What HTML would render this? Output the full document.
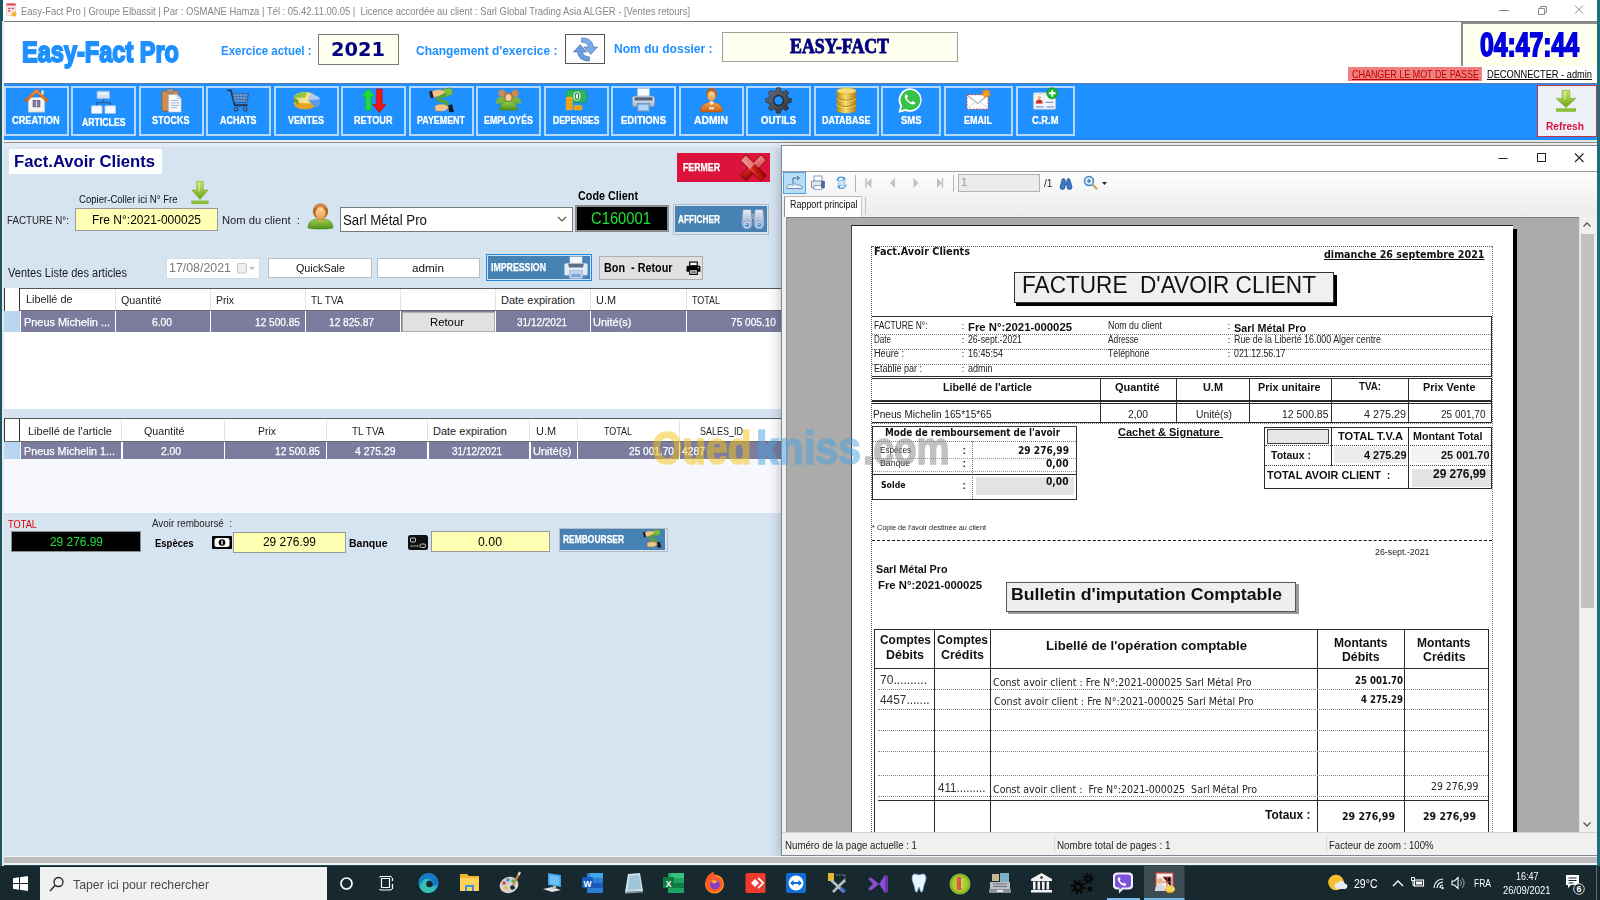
<!DOCTYPE html>
<html lang="fr">
<head>
<meta charset="utf-8">
<title>Easy-Fact Pro</title>
<style>
*{box-sizing:border-box;margin:0;padding:0}
html,body{width:1600px;height:900px;overflow:hidden;background:#fff}
body{font-family:"Liberation Sans","DejaVu Sans",sans-serif;font-size:11px;color:#000;position:relative}
.a{position:absolute;white-space:pre}
svg{overflow:visible}
</style>
</head>
<body>
<svg width="0" height="0" style="position:absolute"><defs>
<linearGradient id="gGold" x1="0" x2="1"><stop offset="0" stop-color="#b8860b"/><stop offset=".45" stop-color="#f7dd6a"/><stop offset="1" stop-color="#b07d10"/></linearGradient>
<linearGradient id="gGreen" x1="0" y1="0" x2="0" y2="1"><stop offset="0" stop-color="#c8e66a"/><stop offset="1" stop-color="#6aa516"/></linearGradient>
<linearGradient id="gRoof" x1="0" y1="0" x2="0" y2="1"><stop offset="0" stop-color="#ff9a3a"/><stop offset="1" stop-color="#d9600f"/></linearGradient>
<linearGradient id="gSkin" x1="0" y1="0" x2="0" y2="1"><stop offset="0" stop-color="#ffd9a0"/><stop offset="1" stop-color="#e89a45"/></linearGradient>
<linearGradient id="gOrange" x1="0" y1="0" x2="0" y2="1"><stop offset="0" stop-color="#f6a04a"/><stop offset="1" stop-color="#c86010"/></linearGradient>
<linearGradient id="gGear" x1="0" y1="0" x2="1" y2="1"><stop offset="0" stop-color="#6a6f78"/><stop offset="1" stop-color="#2c2f36"/></linearGradient>
<linearGradient id="gPrn" x1="0" y1="0" x2="0" y2="1"><stop offset="0" stop-color="#eef2f8"/><stop offset="1" stop-color="#9fb3cc"/></linearGradient>
<linearGradient id="gRedX" x1="0" y1="0" x2="1" y2="1"><stop offset="0" stop-color="#f08a8a"/><stop offset=".5" stop-color="#d01818"/><stop offset="1" stop-color="#8a0808"/></linearGradient>
<linearGradient id="gBino" x1="0" y1="0" x2="0" y2="1"><stop offset="0" stop-color="#e8eef6"/><stop offset="1" stop-color="#7f9cc0"/></linearGradient>
<linearGradient id="gUser" x1="0" y1="0" x2="0" y2="1"><stop offset="0" stop-color="#9ad04a"/><stop offset="1" stop-color="#4f8f1a"/></linearGradient>
</defs></svg>
<!-- sec_top -->
<div class="a" style="left:0px;top:0px;width:1600px;height:21px;background:#fff;"></div>
<svg class="a" style="left:6px;top:3px" width="11" height="14" viewBox="0 0 11 14"><rect x=".5" y=".5" width="9" height="12" fill="#fbeff0" stroke="#e9b8bc" stroke-width=".6"/><rect x=".5" y=".5" width="9" height="2" fill="#d9434a"/><path d="M2 5.500h2.500M5.500 5.500h2.500M2 8h2.500" stroke="#c9565c" stroke-width="1.300"/><circle cx="8" cy="11" r="2.600" fill="#f2b632"/></svg>
<div class="a" style="left:21.00px;top:3.50px;font-size:11px;line-height:14px;color:#868686;transform-origin:0 50%;transform:scaleX(0.8582);">Easy-Fact Pro | Groupe Elbassit | Par : OSMANE Hamza | Tél : 05.42.11.00.05 | &nbsp;Licence accordée au client : Sarl Global Trading Asia ALGER - [Ventes retours]</div>
<svg class="a" style="left:1490px;top:0" width="110" height="21" viewBox="0 0 110 21"><path d="M9 10.500h10" stroke="#8a8a8a" stroke-width="1"/><path d="M48.500 8.500h6v6h-6zM50.500 8.500v-2h6v6h-2" fill="none" stroke="#8a8a8a" stroke-width="1"/><path d="M85 5.500l8 8M93 5.500l-8 8" stroke="#8a8a8a" stroke-width="1"/></svg>
<div class="a" style="left:3px;top:21px;width:1594px;height:62px;background:#fff;border-top:1px solid #7f7f7f;"></div>
<div class="a" style="left:22.00px;top:33.50px;font-size:29px;line-height:36px;font-weight:bold;color:#1e90ff;transform-origin:0 50%;transform:scaleX(0.8117);-webkit-text-stroke:1.9px #1e90ff;">Easy-Fact Pro</div>
<div class="a" style="left:220.50px;top:42.50px;font-size:13px;line-height:16px;font-weight:bold;color:#1e90ff;transform-origin:0 50%;transform:scaleX(0.8819);">Exercice actuel :</div>
<div class="a" style="left:318px;top:33.5px;width:81px;height:31px;background:#fffff0;border:1px solid #7a7a7a;"></div>
<div class="a" style="left:331.00px;top:36.50px;font-size:20px;line-height:25px;font-weight:bold;color:#000080;font-family:'DejaVu Sans','Liberation Sans',sans-serif;transform-origin:0 50%;transform:scaleX(0.9700);">2021</div>
<div class="a" style="left:416.00px;top:42.50px;font-size:13px;line-height:16px;font-weight:bold;color:#1e90ff;transform-origin:0 50%;transform:scaleX(0.9226);">Changement d&#x27;exercice :</div>
<div class="a" style="left:565px;top:34px;width:40px;height:29.5px;background:#fff;border:1px solid #555;"><svg width="27" height="27" viewBox="0 0 28 28" style="position:absolute;left:5.500px;top:.500px"><path d="M10 2C17 2 22 5.500 22 11.500h4.500L19.500 19 12.500 11.500H17C17 8.500 14 6.500 10 6.500z" fill="#7aaae6" stroke="#3f6fb0" stroke-width=".7"/><path d="M18 26C11 26 6 22.500 6 16.500H1.500L8.500 9l7 7.500H11c0 3 3 5 7 5z" fill="#6a9bdc" stroke="#3f6fb0" stroke-width=".7"/></svg></div>
<div class="a" style="left:614.00px;top:39.50px;font-size:13.5px;line-height:17px;font-weight:bold;color:#1e90ff;transform-origin:0 50%;transform:scaleX(0.8933);">Nom du dossier :</div>
<div class="a" style="left:721.5px;top:32px;width:236px;height:29.5px;background:#fffff0;border:1px solid #a0a0a0;"></div>
<div class="a" style="left:790.00px;top:32.50px;font-size:21px;line-height:26px;font-weight:bold;color:#000080;font-family:'Liberation Serif','DejaVu Serif',serif;transform-origin:0 50%;transform:scaleX(0.8483);-webkit-text-stroke:.9px #000080;">EASY-FACT</div>
<div class="a" style="left:1461px;top:22px;width:136px;height:44px;background:#ffffee;border-left:2px solid #8d8d8d;border-top:2px solid #8d8d8d;"></div>
<div class="a" style="left:1480.00px;top:22.50px;font-size:34px;line-height:42px;font-weight:bold;color:#0000e0;transform-origin:0 50%;transform:scaleX(0.7274);-webkit-text-stroke:1.9px #0000e0;">04:47:44</div>
<div class="a" style="left:1348px;top:67px;width:134px;height:13.5px;background:#f08080;"></div>
<div class="a" style="left:1351.50px;top:67.50px;font-size:10.5px;line-height:13px;color:#c00000;transform-origin:0 50%;transform:scaleX(0.8524);text-decoration:underline;">CHANGER LE MOT DE PASSE</div>
<div class="a" style="left:1487.00px;top:67.50px;font-size:10.5px;line-height:13px;transform-origin:0 50%;transform:scaleX(0.8821);text-decoration:underline;">DECONNECTER - admin</div>
<div class="a" style="left:3px;top:82.5px;width:1594px;height:57.5px;background:#1e90ff;border-top:1px solid #5f7fa8;"></div>
<div class="a" style="left:3.5px;top:85.5px;width:65px;height:50px;background:#1e90ff;border:2px solid #b4d9fc;"></div>
<svg width="27" height="27" viewBox="0 0 28 28" style="position:absolute;left:22.5px;top:86.500px"><rect x="5.500" y="11" width="17" height="15" fill="#f4f4f4" stroke="#c4c4c4" stroke-width=".8"/><rect x="10.5" y="14" width="7" height="6.5" fill="#8a7ca8" stroke="#5d5378" stroke-width=".8"/><rect x="13.5" y="14" width="1" height="6.5" fill="#ddd"/><path d="M1.5 14 L14 2 L26.5 14 L24.5 15.8 L14 5.8 L3.5 15.8 Z" fill="url(#gRoof)" stroke="#c0550c" stroke-width=".6"/><rect x="19" y="3.5" width="2.6" height="4.5" fill="#e8e8e8" stroke="#aaa" stroke-width=".5"/></svg>
<div class="a" style="left:12.20px;top:114.00px;font-size:10.5px;line-height:13px;font-weight:bold;color:#fff;transform-origin:0 50%;transform:scaleX(0.8805);text-shadow:0 0 1px #cfe6ff;">CREATION</div>
<div class="a" style="left:71px;top:85.5px;width:65px;height:50px;background:#1e90ff;border:2px solid #b4d9fc;"></div>
<svg width="27" height="27" viewBox="0 0 28 28" style="position:absolute;left:90.0px;top:86.500px"><path d="M14 12v4.500M7 20v-3.800h14V20" fill="none" stroke="#2f5f9c" stroke-width="1.500"/><rect x="7.300" y="4.300" width="13" height="7.700" rx=".8" fill="#d3e2f6" stroke="#a3bde0" stroke-width=".8"/><rect x="8.500" y="5.500" width="10.600" height="2.500" fill="#e9f1fb"/><rect x="1.500" y="19.500" width="11" height="8" rx=".8" fill="#f6f9ff" stroke="#b3c9e8" stroke-width=".8"/><rect x="15.500" y="19.500" width="11" height="8" rx=".8" fill="#f6f9ff" stroke="#b3c9e8" stroke-width=".8"/></svg>
<div class="a" style="left:81.75px;top:115.00px;font-size:11.5px;line-height:14px;font-weight:bold;color:#fff;transform-origin:0 50%;transform:scaleX(0.7565);text-shadow:0 0 1px #cfe6ff;">ARTICLES</div>
<div class="a" style="left:138.5px;top:85.5px;width:65px;height:50px;background:#1e90ff;border:2px solid #b4d9fc;"></div>
<svg width="27" height="27" viewBox="0 0 28 28" style="position:absolute;left:157.5px;top:86.500px"><rect x="4" y="4" width="17" height="21" rx="1.5" fill="#c98f55" stroke="#8f5a2a" stroke-width=".8"/><rect x="9" y="2" width="7" height="4" rx="1" fill="#9a9a9a" stroke="#666" stroke-width=".6"/><path d="M11 8h9l4 4v14H11z" fill="#fdfdfd" stroke="#b5b5b5" stroke-width=".7"/><path d="M20 8v4h4" fill="#dfe6ee" stroke="#b5b5b5" stroke-width=".6"/><path d="M13 14h8M13 16.5h9M13 19h9M13 21.5h7" stroke="#8fb0d8" stroke-width="1"/></svg>
<div class="a" style="left:152.25px;top:114.00px;font-size:10.5px;line-height:13px;font-weight:bold;color:#fff;transform-origin:0 50%;transform:scaleX(0.8605);text-shadow:0 0 1px #cfe6ff;">STOCKS</div>
<div class="a" style="left:206px;top:85.5px;width:65px;height:50px;background:#1e90ff;border:2px solid #b4d9fc;"></div>
<svg width="27" height="27" viewBox="0 0 28 28" style="position:absolute;left:225.0px;top:86.500px"><path d="M3 3.5h3.2l4 15.5h12.5" fill="none" stroke="#25354d" stroke-width="2" stroke-linecap="round" stroke-linejoin="round"/><path d="M8 7h16.5l-2 9H10z" fill="#9fc2ee" fill-opacity=".55" stroke="#3d5f8f" stroke-width="1.2"/><path d="M11.5 7.5l1.3 8M15 7.5l.7 8M18.5 7.5v8M22 7.5l-.8 8M9 10h15M9.6 13h13.7" stroke="#3d5f8f" stroke-width=".8"/><circle cx="11.5" cy="23" r="2.3" fill="#2b4469"/><circle cx="21" cy="23" r="2.3" fill="#2b4469"/><circle cx="11.5" cy="23" r=".9" fill="#9db6d8"/><circle cx="21" cy="23" r=".9" fill="#9db6d8"/></svg>
<div class="a" style="left:220.20px;top:114.00px;font-size:10.5px;line-height:13px;font-weight:bold;color:#fff;transform-origin:0 50%;transform:scaleX(0.8515);text-shadow:0 0 1px #cfe6ff;">ACHATS</div>
<div class="a" style="left:273.5px;top:85.5px;width:65px;height:50px;background:#1e90ff;border:2px solid #b4d9fc;"></div>
<svg width="27" height="27" viewBox="0 0 28 28" style="position:absolute;left:292.5px;top:86.500px"><g transform="translate(-2.500,-.500) scale(1.150,1.050)"><ellipse cx="13" cy="17" rx="10" ry="5.5" fill="#e3a528"/><rect x="3" y="11" width="20" height="6" fill="#e9b83a"/><ellipse cx="13" cy="11" rx="10" ry="5.5" fill="#f7e08a"/><path d="M3 11a10 5.5 0 0 1 12-5.3L13 11z" fill="#8fc63f"/><path d="M3 11v2.5a10 5 0 0 0 4 4V13z" fill="#6da32a"/><path d="M16 13.5l2-5.6a10 5.5 0 0 1 8.5 4.6v5a10 5.5 0 0 1-4 3.5z" fill="#5b9be0"/><path d="M16 13.5l2-5.6a10 5.5 0 0 1 8.5 4.6z" fill="#a9cdf5"/></svg>
<div class="a" style="left:288.00px;top:114.00px;font-size:10.5px;line-height:13px;font-weight:bold;color:#fff;transform-origin:0 50%;transform:scaleX(0.8568);text-shadow:0 0 1px #cfe6ff;">VENTES</div>
<div class="a" style="left:341px;top:85.5px;width:65px;height:50px;background:#1e90ff;border:2px solid #b4d9fc;"></div>
<svg width="27" height="27" viewBox="0 0 28 28" style="position:absolute;left:360.0px;top:86.500px"><path d="M8.5 1.5L1.5 10h4v14h6V10h4z" fill="#1edc3c" stroke="#12a82a" stroke-width=".6"/><path d="M20 26.5L27 18h-4V2h-6v16h-4z" fill="#f01414" stroke="#b40c0c" stroke-width=".6"/></svg>
<div class="a" style="left:354.25px;top:114.00px;font-size:10.5px;line-height:13px;font-weight:bold;color:#fff;transform-origin:0 50%;transform:scaleX(0.8719);text-shadow:0 0 1px #cfe6ff;">RETOUR</div>
<div class="a" style="left:408.5px;top:85.5px;width:65px;height:50px;background:#1e90ff;border:2px solid #b4d9fc;"></div>
<svg width="27" height="27" viewBox="0 0 28 28" style="position:absolute;left:427.5px;top:86.500px"><path d="M15 2l9-1 2 6-9 4z" fill="#7ac143" stroke="#4d8a24" stroke-width=".6"/><path d="M3 6c3-3 9-4 13-2l2 2-5 3-8 2z" fill="#f3c48a" stroke="#c08a50" stroke-width=".5"/><path d="M1 5l3-1 2 7-3 1z" fill="#222"/><path d="M18 8c-3 1-7 2-8 5 2 2 8 1 10 4l-3 3" fill="none" stroke="#5aa02c" stroke-width="3" stroke-linecap="round"/><path d="M7 20c3-2 8-3 12-1l3 2-5 4-9 0z" fill="#f3c48a" stroke="#c08a50" stroke-width=".5"/><path d="M21 19l4-1 2 8h-5z" fill="#1a1a1a"/></svg>
<div class="a" style="left:417.00px;top:114.00px;font-size:10.5px;line-height:13px;font-weight:bold;color:#fff;transform-origin:0 50%;transform:scaleX(0.8479);text-shadow:0 0 1px #cfe6ff;">PAYEMENT</div>
<div class="a" style="left:476px;top:85.5px;width:65px;height:50px;background:#1e90ff;border:2px solid #b4d9fc;"></div>
<svg width="27" height="27" viewBox="0 0 28 28" style="position:absolute;left:495.0px;top:86.500px"><circle cx="7" cy="6.5" r="3.6" fill="#c98a5a"/><circle cx="21" cy="6.5" r="3.6" fill="#c98a5a"/><path d="M1 17c0-5 3-7 6-7s6 2 6 7z" fill="#7fb23a"/><path d="M15 17c0-5 3-7 6-7s6 2 6 7z" fill="#7fb23a"/><path d="M5 24c0-7 4-9 9-9s9 2 9 9z" fill="url(#gUser)" stroke="#4a7d18" stroke-width=".5"/><circle cx="14" cy="10" r="4.6" fill="#b8703c"/><ellipse cx="14" cy="11" rx="3" ry="3.6" fill="#f6cfa0"/></svg>
<div class="a" style="left:484.00px;top:114.00px;font-size:10.5px;line-height:13px;font-weight:bold;color:#fff;transform-origin:0 50%;transform:scaleX(0.8396);text-shadow:0 0 1px #cfe6ff;">EMPLOYÉS</div>
<div class="a" style="left:543.5px;top:85.5px;width:65px;height:50px;background:#1e90ff;border:2px solid #b4d9fc;"></div>
<svg width="27" height="27" viewBox="0 0 28 28" style="position:absolute;left:562.5px;top:86.500px"><path d="M5 3h17l2 2v3l2 2-2 2v4H5l-2-2 1-4-1-4z" fill="#2fb55d" stroke="#1d8a42" stroke-width=".6"/><ellipse cx="14.5" cy="9.5" rx="4.2" ry="5.2" fill="#e9f7e6" stroke="#1d8a42" stroke-width=".6"/><path d="M14.500 6.2a1.7 3 0 0 0 0 6.600a1.700 3 0 0 0 0-6.600z" fill="none" stroke="#1d8a42" stroke-width="1.200"/><rect x="3" y="10" width="7" height="14" rx="1.500" fill="#f2a91e"/><path d="M3 14h7M3 17.500h7M3 21h7" stroke="#d08a0c" stroke-width=".7"/><rect x="11" y="19" width="9" height="5" rx="1.500" fill="#f2a91e"/><path d="M11 21.500h9" stroke="#d08a0c" stroke-width=".7"/></svg>
<div class="a" style="left:552.75px;top:114.00px;font-size:10.5px;line-height:13px;font-weight:bold;color:#fff;transform-origin:0 50%;transform:scaleX(0.8131);text-shadow:0 0 1px #cfe6ff;">DEPENSES</div>
<div class="a" style="left:611px;top:85.5px;width:65px;height:50px;background:#1e90ff;border:2px solid #b4d9fc;"></div>
<svg width="27" height="27" viewBox="0 0 28 28" style="position:absolute;left:630.0px;top:86.500px"><rect x="8" y="1.5" width="12" height="9" fill="#fafcff" stroke="#b9c6d8" stroke-width=".7"/><rect x="2.5" y="9.500" width="23" height="11" rx="2.200" fill="url(#gPrn)" stroke="#7d8fa8" stroke-width=".7"/><rect x="4.500" y="10.500" width="19" height="3.500" rx="1" fill="#56657c"/><rect x="7.500" y="17" width="13" height="8.500" fill="#7fb0e6" stroke="#5f87b8" stroke-width=".7"/><rect x="9" y="18.500" width="10" height="5.500" fill="#b5d3f3"/></svg>
<div class="a" style="left:621.00px;top:114.00px;font-size:10.5px;line-height:13px;font-weight:bold;color:#fff;transform-origin:0 50%;transform:scaleX(0.9074);text-shadow:0 0 1px #cfe6ff;">EDITIONS</div>
<div class="a" style="left:678.5px;top:85.5px;width:65px;height:50px;background:#1e90ff;border:2px solid #b4d9fc;"></div>
<svg width="27" height="27" viewBox="0 0 28 28" style="position:absolute;left:697.5px;top:86.500px"><path d="M2.500 26c0-8 5-10 11.500-10s11.500 2 11.500 10z" fill="url(#gOrange)" stroke="#a8500c" stroke-width=".5"/><path d="M8.500 7.500c0-4 2.500-6.500 5.500-6.500s5.500 2.500 5.500 6.500c0 2-1 3-1 3h-9s-1-1-1-3z" fill="#b8651f"/><ellipse cx="14" cy="9.500" rx="4" ry="5.200" fill="url(#gSkin)" stroke="#c47a30" stroke-width=".4"/><path d="M11 16l3 3 3-3-3-1.500z" fill="#f8e2c0"/><rect x="11.500" y="21" width="5" height="2.200" fill="#fff" fill-opacity=".8"/></svg>
<div class="a" style="left:694.00px;top:114.00px;font-size:10.5px;line-height:13px;font-weight:bold;color:#fff;transform-origin:0 50%;transform:scaleX(0.9877);text-shadow:0 0 1px #cfe6ff;">ADMIN</div>
<div class="a" style="left:746px;top:85.5px;width:65px;height:50px;background:#1e90ff;border:2px solid #b4d9fc;"></div>
<svg width="27" height="27" viewBox="0 0 28 28" style="position:absolute;left:765.0px;top:86.500px"><path d="M12 1.500h4l.7 3.300 2.300 1 2.900-1.800 2.800 2.800-1.800 2.900 1 2.300 3.300.7v4l-3.300.7-1 2.300 1.800 2.900-2.800 2.800-2.900-1.800-2.300 1-.7 3.300h-4l-.7-3.300-2.300-1-2.900 1.800-2.800-2.800 1.800-2.900-1-2.300-3.300-.7v-4l3.300-.7 1-2.300-1.800-2.900 2.800-2.800 2.900 1.800 2.300-1z" fill="url(#gGear)" stroke="#23262c" stroke-width=".6" transform="translate(0,-.7)"/><circle cx="14" cy="14" r="5" fill="#1e90ff" stroke="#1a1d22" stroke-width="1.200"/></svg>
<div class="a" style="left:761.00px;top:114.00px;font-size:10.5px;line-height:13px;font-weight:bold;color:#fff;transform-origin:0 50%;transform:scaleX(0.9091);text-shadow:0 0 1px #cfe6ff;">OUTILS</div>
<div class="a" style="left:813.5px;top:85.5px;width:65px;height:50px;background:#1e90ff;border:2px solid #b4d9fc;"></div>
<svg width="27" height="27" viewBox="0 0 28 28" style="position:absolute;left:832.5px;top:86.500px"><rect x="4" y="4" width="20" height="20" fill="url(#gGold)"/><ellipse cx="14" cy="24" rx="10" ry="3.200" fill="url(#gGold)"/><ellipse cx="14" cy="4" rx="10" ry="3.200" fill="#f5dc72" stroke="#c89a1e" stroke-width=".5"/><path d="M4 10.500a10 3.200 0 0 0 20 0M4 17a10 3.200 0 0 0 20 0" fill="none" stroke="#a87a10" stroke-width="1"/><path d="M4 11.500a10 3.200 0 0 0 20 0M4 18a10 3.200 0 0 0 20 0" fill="none" stroke="#fbe98e" stroke-width=".7"/></svg>
<div class="a" style="left:821.75px;top:114.00px;font-size:10.5px;line-height:13px;font-weight:bold;color:#fff;transform-origin:0 50%;transform:scaleX(0.8542);text-shadow:0 0 1px #cfe6ff;">DATABASE</div>
<div class="a" style="left:881.3px;top:85.5px;width:59.3px;height:50px;background:#1e90ff;border:2px solid #b4d9fc;"></div>
<svg width="27" height="27" viewBox="0 0 28 28" style="position:absolute;left:897.4px;top:86.500px"><path d="M14 1.200a12.300 12.300 0 0 0-10.600 18.600L1.500 26.800l7.200-1.900A12.300 12.300 0 1 0 14 1.200z" fill="#fff"/><path d="M14 3.200a10.300 10.300 0 0 0-8.700 15.900L4.200 24l5-1.300A10.300 10.300 0 1 0 14 3.200z" fill="#35c14a"/><path d="M10.300 8c-.5-.9-1.600-.4-2 .5-.8 1.700.3 4.300 2.600 6.600s5.200 3.700 7 2.900c1-.5 1.500-1.700.6-2.200l-2-1.100c-.6-.3-1 .6-1.500 1-.4.300-2-.6-3.100-1.800s-2-2.700-1.600-3.100c.5-.5 1.300-.9 1-1.500z" fill="#fff"/></svg>
<div class="a" style="left:900.70px;top:114.00px;font-size:10.5px;line-height:13px;font-weight:bold;color:#fff;transform-origin:0 50%;transform:scaleX(0.9005);text-shadow:0 0 1px #cfe6ff;">SMS</div>
<div class="a" style="left:944px;top:85.5px;width:68.8px;height:50px;background:#1e90ff;border:2px solid #b4d9fc;"></div>
<svg width="27" height="27" viewBox="0 0 28 28" style="position:absolute;left:964.9px;top:86.500px"><rect x="2" y="8" width="22" height="15" rx="1" fill="#f8f8f8" stroke="#c33" stroke-width="1" stroke-dasharray="2 1.500"/><rect x="3" y="9" width="20" height="13" fill="#fdfdfd"/><path d="M3 9l10 8 10-8" fill="none" stroke="#aeb6c2" stroke-width="1.200"/><path d="M3 22l7.500-7M23 22l-7.500-7" stroke="#c9cfd8" stroke-width=".9"/><path d="M22 1.500l1.300 2.700 3-.6-1.400 2.600 2.100 2.100-3 .4.200 3-2.200-2-2.200 2 .2-3-3-.4 2.100-2.100-1.400-2.600 3 .6z" fill="#f79a1e" stroke="#d9780c" stroke-width=".4"/></svg>
<div class="a" style="left:964.40px;top:114.00px;font-size:10.5px;line-height:13px;font-weight:bold;color:#fff;transform-origin:0 50%;transform:scaleX(0.8570);text-shadow:0 0 1px #cfe6ff;">EMAIL</div>
<div class="a" style="left:1015.7px;top:85.5px;width:59.8px;height:50px;background:#1e90ff;border:2px solid #b4d9fc;"></div>
<svg width="27" height="27" viewBox="0 0 28 28" style="position:absolute;left:1032.1px;top:86.500px"><rect x="1.500" y="6" width="23" height="17" rx="1" fill="#f3f5f8" stroke="#b9c0ca" stroke-width=".8"/><rect x="3.500" y="8" width="8" height="9" fill="#fff" stroke="#ccc" stroke-width=".5"/><circle cx="7.500" cy="11" r="2" fill="#e9b98a"/><path d="M4 17c0-3 1.500-4 3.500-4s3.500 1 3.500 4z" fill="#d62a2a"/><path d="M4 20.500h8M15 20.500h8M14 16h8" stroke="#7aa0d0" stroke-width="1.300"/><circle cx="21" cy="6.500" r="5.800" fill="#18b52c" stroke="#0d8a1d" stroke-width=".6"/><path d="M21 3v7M17.500 6.500h7" stroke="#fff" stroke-width="2"/></svg>
<div class="a" style="left:1032.35px;top:114.00px;font-size:10.5px;line-height:13px;font-weight:bold;color:#fff;transform-origin:0 50%;transform:scaleX(0.8908);text-shadow:0 0 1px #cfe6ff;">C.R.M</div>
<div class="a" style="left:1536.5px;top:84.5px;width:60px;height:52px;background:#eef0f8;border:1px solid #c8324a;"></div>
<svg width="24" height="26" viewBox="0 0 28 28" style="position:absolute;left:1553.5px;top:88px"><path d="M9.500 1.500h9V11h7L14 21.500 2.500 11h7z" fill="url(#gGreen)" stroke="#7aa82a" stroke-width=".7"/><path d="M11.500 2.500h2.500v10h-2.500z" fill="#e2f3a0" fill-opacity=".6"/><rect x="2.500" y="23" width="23" height="3.200" fill="#8cbf2e" stroke="#7aa82a" stroke-width=".5"/></svg>
<div class="a" style="left:1546.00px;top:119.00px;font-size:11.5px;line-height:14px;font-weight:bold;color:#dc143c;transform-origin:0 50%;transform:scaleX(0.8873);">Refresh</div>
<div class="a" style="left:3px;top:140px;width:1594px;height:3px;background:#f0f0f0;border-bottom:1px solid #8f8f8f;"></div>
<!-- sec_left -->
<div class="a" style="left:3px;top:143px;width:778px;height:713px;background:#d6e4f2;"></div>
<div class="a" style="left:3px;top:143px;width:778px;height:4px;background:#e2ebf5;"></div>
<div class="a" style="left:9px;top:148.5px;width:152.5px;height:25px;background:#fff;"></div>
<div class="a" style="left:14.00px;top:151.50px;font-size:16px;line-height:20px;font-weight:bold;color:#000080;transform-origin:0 50%;transform:scaleX(1.0411);">Fact.Avoir Clients</div>
<div class="a" style="left:676.5px;top:153px;width:93.5px;height:28.5px;background:#dc143c;"></div>
<div class="a" style="left:683.00px;top:160.50px;font-size:10.5px;line-height:13px;font-weight:bold;color:#fff;transform-origin:0 50%;transform:scaleX(0.8344);-webkit-text-stroke:.25px #fff;">FERMER</div>
<svg preserveAspectRatio="none" width="27" height="27" viewBox="0 0 28 28" style="position:absolute;left:740px;top:153.5px"><g transform="translate(14,14.500)"><rect x="-4.300" y="-15.500" width="8.600" height="31" rx="1.200" transform="rotate(45)" fill="#7a0a0a"/><rect x="-4.300" y="-15.500" width="8.600" height="31" rx="1.200" transform="rotate(-45)" fill="#7a0a0a"/><rect x="-3.600" y="-14.800" width="7.200" height="29.600" rx="1" transform="rotate(45)" fill="url(#gRedX)"/><rect x="-3.600" y="-14.800" width="7.200" height="29.600" rx="1" transform="rotate(-45)" fill="url(#gRedX)"/><rect x="-3.600" y="-14.800" width="7.200" height="13" rx="1" transform="rotate(-45)" fill="#f29a9a" fill-opacity=".75"/><rect x="-3.600" y="-14.800" width="7.200" height="11" rx="1" transform="rotate(45)" fill="#ee8a8a" fill-opacity=".6"/></g></svg>
<div class="a" style="left:78.50px;top:191.50px;font-size:11px;line-height:14px;color:#111;transform-origin:0 50%;transform:scaleX(0.8701);">Copier-Coller ici N° Fre</div>
<svg preserveAspectRatio="none" width="20" height="25.5" viewBox="0 0 28 28" style="position:absolute;left:189.5px;top:179.5px"><path d="M9.500 1.500h9V11h7L14 21.500 2.500 11h7z" fill="url(#gGreen)" stroke="#7aa82a" stroke-width=".7"/><path d="M11.500 2.500h2.500v10h-2.500z" fill="#e2f3a0" fill-opacity=".6"/><rect x="2.500" y="23" width="23" height="3.200" fill="#8cbf2e" stroke="#7aa82a" stroke-width=".5"/></svg>
<div class="a" style="left:7.00px;top:212.50px;font-size:11px;line-height:14px;color:#222;transform-origin:0 50%;transform:scaleX(0.8883);">FACTURE N°:</div>
<div class="a" style="left:75px;top:208px;width:143px;height:22.5px;background:#ffffb4;border:1px solid #9a9a9a;"></div>
<div class="a" style="left:92.00px;top:211.50px;font-size:13px;line-height:16px;transform-origin:0 50%;transform:scaleX(0.9241);">Fre N°:2021-000025</div>
<div class="a" style="left:222.00px;top:212.50px;font-size:11.5px;line-height:14px;color:#222;transform-origin:0 50%;transform:scaleX(0.9761);">Nom du client &nbsp;:</div>
<svg preserveAspectRatio="none" width="27" height="26.5" viewBox="0 0 28 28" style="position:absolute;left:306.5px;top:202.5px"><path d="M1 26.300c0-6 3.500-8.300 8.500-9.300l4.500 1.500 4.500-1.500c5 1 8.500 3.300 8.500 9.300-5 1.700-21 1.700-26 0z" fill="url(#gUser)" stroke="#3f7a14" stroke-width=".5"/><path d="M11.500 15h5v4l-2.500 1.500-2.500-1.500z" fill="#e8a050"/><ellipse cx="14" cy="8.800" rx="8" ry="8.300" fill="#b5651f"/><path d="M6.500 7c1-4 4-6 7.500-6s6.500 2 7.500 6c-2-2-5-3-7.500-3s-5.500 1-7.500 3z" fill="#d9884a"/><ellipse cx="14" cy="10.800" rx="5.200" ry="6.800" fill="url(#gSkin)" stroke="#c47a30" stroke-width=".4"/></svg>
<div class="a" style="left:340px;top:207px;width:233px;height:24.5px;background:#fff;border:1px solid #7a7a7a;"></div>
<div class="a" style="left:343.00px;top:210.50px;font-size:14px;line-height:18px;color:#111;transform-origin:0 50%;transform:scaleX(0.9470);">Sarl Métal Pro</div>
<svg class="a" style="left:557px;top:216px" width="10" height="7" viewBox="0 0 10 7"><path d="M1 1l4 4 4-4" fill="none" stroke="#555" stroke-width="1.200"/></svg>
<div class="a" style="left:578.00px;top:188.50px;font-size:12px;line-height:15px;font-weight:bold;transform-origin:0 50%;transform:scaleX(0.8999);">Code Client</div>
<div class="a" style="left:575px;top:205px;width:94px;height:27px;background:#000;border:2px solid #8c8c8c;"></div>
<div class="a" style="left:591.00px;top:208.50px;font-size:16px;line-height:20px;color:#22e03a;transform-origin:0 50%;transform:scaleX(0.9237);">C160001</div>
<div class="a" style="left:673px;top:203.5px;width:95.5px;height:31px;background:#d9e3ee;border:1px solid #b5bcc6;"></div>
<div class="a" style="left:675px;top:206px;width:92px;height:26px;background:#4682b4;"></div>
<div class="a" style="left:678.00px;top:213.00px;font-size:10.5px;line-height:13px;font-weight:bold;color:#fff;transform-origin:0 50%;transform:scaleX(0.7911);-webkit-text-stroke:.25px #fff;">AFFICHER</div>
<svg preserveAspectRatio="none" width="26" height="24" viewBox="0 0 28 28" style="position:absolute;left:739.5px;top:207px"><rect x="11" y="8" width="6" height="6" fill="#8fa8c8"/><path d="M4.500 3h6c1 0 1.500.5 1.500 1.500l1.500 15.500a6 6 0 1 1-12 0l1.500-15.500c0-1 .5-1.500 1.500-1.500z" fill="url(#gBino)" stroke="#5b7aa3" stroke-width=".6"/><path d="M17.500 3h6c1 0 1.500.5 1.500 1.500l1.500 15.500a6 6 0 1 1-12 0l1.500-15.500c0-1 .5-1.500 1.500-1.500z" fill="url(#gBino)" stroke="#5b7aa3" stroke-width=".6"/><circle cx="7.500" cy="21" r="4.300" fill="#dfe8f4" stroke="#6b88ad" stroke-width=".6"/><circle cx="20.500" cy="21" r="4.300" fill="#dfe8f4" stroke="#6b88ad" stroke-width=".6"/><circle cx="7.500" cy="21" r="2.700" fill="#4f8fdc"/><circle cx="20.500" cy="21" r="2.700" fill="#4f8fdc"/><circle cx="6.800" cy="20.300" r="1" fill="#bfe0ff"/><circle cx="19.800" cy="20.300" r="1" fill="#bfe0ff"/></svg>
<div class="a" style="left:8.00px;top:265.50px;font-size:12px;line-height:15px;color:#1a1a1a;transform-origin:0 50%;transform:scaleX(0.9196);">Ventes Liste des articles</div>
<div class="a" style="left:166px;top:257.5px;width:94px;height:21.5px;background:#fff;border:1px solid #d5dbe3;"></div>
<div class="a" style="left:168.50px;top:261.00px;font-size:12px;line-height:15px;color:#7a7a7a;transform-origin:0 50%;transform:scaleX(1.0323);">17/08/2021</div>
<svg class="a" style="left:237px;top:262px" width="20" height="13" viewBox="0 0 20 13"><rect x=".5" y="1.500" width="9" height="9.500" rx="1" fill="#eee" stroke="#c4c4c4"/><path d="M12 5l3 3 3-3z" fill="#c0c0c0"/></svg>
<div class="a" style="left:268px;top:258px;width:104px;height:20px;background:#fff;border:1px solid #b9bec6;"></div>
<div class="a" style="left:295.50px;top:261.00px;font-size:11.5px;line-height:14px;color:#111;transform-origin:0 50%;transform:scaleX(0.9347);">QuickSale</div>
<div class="a" style="left:377px;top:258px;width:103px;height:20px;background:#fff;border:1px solid #b9bec6;"></div>
<div class="a" style="left:412.00px;top:261.00px;font-size:11.5px;line-height:14px;color:#111;transform-origin:0 50%;transform:scaleX(1.0214);">admin</div>
<div class="a" style="left:485.5px;top:253.5px;width:106.5px;height:27.5px;background:#4682b4;border:1.500px solid #1e8be6;box-shadow:inset 0 0 0 1px #cfe2f5;"></div>
<div class="a" style="left:490.50px;top:261.00px;font-size:10.5px;line-height:13px;font-weight:bold;color:#fff;transform-origin:0 50%;transform:scaleX(0.8341);-webkit-text-stroke:.25px #fff;">IMPRESSION</div>
<svg preserveAspectRatio="none" width="26" height="24" viewBox="0 0 28 28" style="position:absolute;left:563px;top:255.5px"><rect x="7.500" y="1" width="13" height="10" fill="#f7f9fc" stroke="#d0d9e6" stroke-width=".6"/><path d="M4 8.500h20c1.500 0 2.500 1 2.500 2.500v10c0 1-.8 1.500-1.500 1.500H3c-.7 0-1.500-.5-1.500-1.500V11c0-1.500 1-2.500 2.500-2.500z" fill="#e4ebf4" stroke="#a9b8cc" stroke-width=".6"/><path d="M5.500 9h17l-1 4.500h-15z" fill="#5f6f86"/><rect x="7" y="17" width="14" height="9.500" fill="#b9d3ef" stroke="#88a6cc" stroke-width=".6"/><rect x="9" y="21" width="10" height="3.500" fill="#7fa6d6"/></svg>
<div class="a" style="left:599px;top:255.5px;width:104px;height:24.5px;background:#e1e1e1;border:1px solid #adadad;"></div>
<div class="a" style="left:604.00px;top:261.00px;font-size:12px;line-height:15px;font-weight:bold;transform-origin:0 50%;transform:scaleX(0.9013);">Bon &nbsp;- Retour</div>
<svg preserveAspectRatio="none" width="15" height="15" viewBox="0 0 28 28" style="position:absolute;left:686px;top:260.5px"><rect x="7" y="2" width="14" height="7" fill="#fff" stroke="#000" stroke-width="2.200"/><path d="M3 9h22a2 2 0 0 1 2 2v9h-5v-5H6v5H1v-9a2 2 0 0 1 2-2z" fill="#000"/><rect x="7" y="16" width="14" height="9" fill="#fff" stroke="#000" stroke-width="2.200"/><path d="M9.500 19h9M9.500 22h9" stroke="#000" stroke-width="1.300"/><circle cx="23" cy="12.500" r="1.200" fill="#fff"/></svg>
<div class="a" style="left:4px;top:287.5px;width:777px;height:121px;background:#fff;border-top:1px solid #555;"></div>
<div class="a" style="left:4px;top:310px;width:777px;height:1px;background:#6a6a6a;"></div>
<div class="a" style="left:4px;top:288px;width:15.5px;height:23px;background:#fff;border-right:1.500px solid #333;border-left:1px solid #333;"></div>
<div class="a" style="left:114.5px;top:289px;width:1px;height:21px;background:#e3e3e3;"></div>
<div class="a" style="left:209.5px;top:289px;width:1px;height:21px;background:#e3e3e3;"></div>
<div class="a" style="left:304.5px;top:289px;width:1px;height:21px;background:#e3e3e3;"></div>
<div class="a" style="left:399.5px;top:289px;width:1px;height:21px;background:#e3e3e3;"></div>
<div class="a" style="left:494.5px;top:289px;width:1px;height:21px;background:#e3e3e3;"></div>
<div class="a" style="left:589.5px;top:289px;width:1px;height:21px;background:#e3e3e3;"></div>
<div class="a" style="left:685.5px;top:289px;width:1px;height:21px;background:#e3e3e3;"></div>
<div class="a" style="left:26.00px;top:291.50px;font-size:11px;line-height:14px;color:#222;transform-origin:0 50%;transform:scaleX(0.9874);">Libellé de</div>
<div class="a" style="left:121.00px;top:293.00px;font-size:11px;line-height:14px;color:#222;transform-origin:0 50%;transform:scaleX(0.9737);">Quantité</div>
<div class="a" style="left:216.00px;top:293.00px;font-size:11px;line-height:14px;color:#222;transform-origin:0 50%;transform:scaleX(0.9497);">Prix</div>
<div class="a" style="left:311.00px;top:293.00px;font-size:11px;line-height:14px;color:#222;transform-origin:0 50%;transform:scaleX(0.9059);">TL TVA</div>
<div class="a" style="left:501.00px;top:293.00px;font-size:11px;line-height:14px;color:#222;transform-origin:0 50%;transform:scaleX(1.0000);">Date expiration</div>
<div class="a" style="left:596.00px;top:293.00px;font-size:11px;line-height:14px;color:#222;transform-origin:0 50%;transform:scaleX(0.9915);">U.M</div>
<div class="a" style="left:692.00px;top:293.00px;font-size:11px;line-height:14px;color:#222;transform-origin:0 50%;transform:scaleX(0.8131);">TOTAL</div>
<div class="a" style="left:4px;top:311px;width:15.5px;height:21px;background:#b9d5ef;"></div>
<div class="a" style="left:20.5px;top:311px;width:760px;height:21px;background:#7b7c9e;"></div>
<div class="a" style="left:114.5px;top:311px;width:1.5px;height:21px;background:#fff;"></div>
<div class="a" style="left:209.5px;top:311px;width:1.5px;height:21px;background:#fff;"></div>
<div class="a" style="left:304.5px;top:311px;width:1.5px;height:21px;background:#fff;"></div>
<div class="a" style="left:399.5px;top:311px;width:1.5px;height:21px;background:#fff;"></div>
<div class="a" style="left:494.5px;top:311px;width:1.5px;height:21px;background:#fff;"></div>
<div class="a" style="left:589.5px;top:311px;width:1.5px;height:21px;background:#fff;"></div>
<div class="a" style="left:685.5px;top:311px;width:1.5px;height:21px;background:#fff;"></div>
<div class="a" style="left:401.5px;top:311.5px;width:93px;height:20.5px;background:#e1e1e1;border:1px solid #adadad;"></div>
<div class="a" style="left:429.50px;top:315.00px;font-size:11.5px;line-height:14px;transform-origin:0 50%;transform:scaleX(0.9846);">Retour</div>
<div class="a" style="left:24.00px;top:315.00px;font-size:11px;line-height:14px;color:#fff;transform-origin:0 50%;transform:scaleX(0.9905);-webkit-text-stroke:.25px #fff;">Pneus Michelin ...</div>
<div class="a" style="left:152.00px;top:315.00px;font-size:11px;line-height:14px;color:#fff;transform-origin:0 50%;transform:scaleX(0.9336);-webkit-text-stroke:.25px #fff;">6.00</div>
<div class="a" style="left:255.00px;top:315.00px;font-size:11px;line-height:14px;color:#fff;transform-origin:0 50%;transform:scaleX(0.9195);-webkit-text-stroke:.25px #fff;">12 500.85</div>
<div class="a" style="left:329.00px;top:315.00px;font-size:11px;line-height:14px;color:#fff;transform-origin:0 50%;transform:scaleX(0.9195);-webkit-text-stroke:.25px #fff;">12 825.87</div>
<div class="a" style="left:517.00px;top:315.00px;font-size:11px;line-height:14px;color:#fff;transform-origin:0 50%;transform:scaleX(0.9081);-webkit-text-stroke:.25px #fff;">31/12/2021</div>
<div class="a" style="left:593.00px;top:315.00px;font-size:11px;line-height:14px;color:#fff;transform-origin:0 50%;transform:scaleX(0.9996);-webkit-text-stroke:.25px #fff;">Unité(s)</div>
<div class="a" style="left:731.00px;top:315.00px;font-size:11px;line-height:14px;color:#fff;transform-origin:0 50%;transform:scaleX(0.9195);-webkit-text-stroke:.25px #fff;">75 005.10</div>
<div class="a" style="left:4px;top:418px;width:777px;height:95px;background:#f6f8fd;border-top:1px solid #555;"></div>
<div class="a" style="left:4px;top:419px;width:777px;height:22px;background:#fff;"></div>
<div class="a" style="left:4px;top:440.5px;width:777px;height:1px;background:#6a6a6a;"></div>
<div class="a" style="left:4px;top:419px;width:15.5px;height:22px;background:#fff;border-right:1.500px solid #333;border-left:1px solid #333;"></div>
<div class="a" style="left:121.0px;top:420px;width:1px;height:20px;background:#e3e3e3;"></div>
<div class="a" style="left:223.5px;top:420px;width:1px;height:20px;background:#e3e3e3;"></div>
<div class="a" style="left:325.5px;top:420px;width:1px;height:20px;background:#e3e3e3;"></div>
<div class="a" style="left:427.0px;top:420px;width:1px;height:20px;background:#e3e3e3;"></div>
<div class="a" style="left:529.0px;top:420px;width:1px;height:20px;background:#e3e3e3;"></div>
<div class="a" style="left:576.5px;top:420px;width:1px;height:20px;background:#e3e3e3;"></div>
<div class="a" style="left:678.5px;top:420px;width:1px;height:20px;background:#e3e3e3;"></div>
<div class="a" style="left:28.00px;top:424.00px;font-size:11px;line-height:14px;color:#222;transform-origin:0 50%;transform:scaleX(0.9994);">Libellé de l&#x27;article</div>
<div class="a" style="left:143.75px;top:424.00px;font-size:11px;line-height:14px;color:#222;transform-origin:0 50%;transform:scaleX(0.9737);">Quantité</div>
<div class="a" style="left:258.00px;top:424.00px;font-size:11px;line-height:14px;color:#222;transform-origin:0 50%;transform:scaleX(0.9497);">Prix</div>
<div class="a" style="left:351.75px;top:424.00px;font-size:11px;line-height:14px;color:#222;transform-origin:0 50%;transform:scaleX(0.9059);">TL TVA</div>
<div class="a" style="left:433.00px;top:424.00px;font-size:11px;line-height:14px;color:#222;transform-origin:0 50%;transform:scaleX(1.0000);">Date expiration</div>
<div class="a" style="left:536.00px;top:424.00px;font-size:11px;line-height:14px;color:#222;transform-origin:0 50%;transform:scaleX(0.9915);">U.M</div>
<div class="a" style="left:604.00px;top:424.00px;font-size:11px;line-height:14px;color:#222;transform-origin:0 50%;transform:scaleX(0.8131);">TOTAL</div>
<div class="a" style="left:699.50px;top:424.00px;font-size:11px;line-height:14px;color:#222;transform-origin:0 50%;transform:scaleX(0.8176);">SALES_ID</div>
<div class="a" style="left:4px;top:441.5px;width:15.5px;height:17px;background:#b9d5ef;"></div>
<div class="a" style="left:20.5px;top:441.5px;width:760px;height:17px;background:#7b7c9e;"></div>
<div class="a" style="left:121.0px;top:441.5px;width:1.5px;height:17px;background:#fff;"></div>
<div class="a" style="left:223.5px;top:441.5px;width:1.5px;height:17px;background:#fff;"></div>
<div class="a" style="left:325.5px;top:441.5px;width:1.5px;height:17px;background:#fff;"></div>
<div class="a" style="left:427.0px;top:441.5px;width:1.5px;height:17px;background:#fff;"></div>
<div class="a" style="left:529.0px;top:441.5px;width:1.5px;height:17px;background:#fff;"></div>
<div class="a" style="left:576.5px;top:441.5px;width:1.5px;height:17px;background:#fff;"></div>
<div class="a" style="left:678.5px;top:441.5px;width:1.5px;height:17px;background:#fff;"></div>
<div class="a" style="left:24.00px;top:443.50px;font-size:11px;line-height:14px;color:#fff;transform-origin:0 50%;transform:scaleX(0.9792);-webkit-text-stroke:.25px #fff;">Pneus Michelin 1...</div>
<div class="a" style="left:161.00px;top:443.50px;font-size:11px;line-height:14px;color:#fff;transform-origin:0 50%;transform:scaleX(0.9336);-webkit-text-stroke:.25px #fff;">2.00</div>
<div class="a" style="left:275.00px;top:443.50px;font-size:11px;line-height:14px;color:#fff;transform-origin:0 50%;transform:scaleX(0.9195);-webkit-text-stroke:.25px #fff;">12 500.85</div>
<div class="a" style="left:354.75px;top:443.50px;font-size:11px;line-height:14px;color:#fff;transform-origin:0 50%;transform:scaleX(0.9456);-webkit-text-stroke:.25px #fff;">4 275.29</div>
<div class="a" style="left:452.00px;top:443.50px;font-size:11px;line-height:14px;color:#fff;transform-origin:0 50%;transform:scaleX(0.9081);-webkit-text-stroke:.25px #fff;">31/12/2021</div>
<div class="a" style="left:533.00px;top:443.50px;font-size:11px;line-height:14px;color:#fff;transform-origin:0 50%;transform:scaleX(0.9996);-webkit-text-stroke:.25px #fff;">Unité(s)</div>
<div class="a" style="left:629.00px;top:443.50px;font-size:11px;line-height:14px;color:#fff;transform-origin:0 50%;transform:scaleX(0.9195);-webkit-text-stroke:.25px #fff;">25 001.70</div>
<div class="a" style="left:682.00px;top:443.50px;font-size:11px;line-height:14px;color:#fff;transform-origin:0 50%;transform:scaleX(0.9394);-webkit-text-stroke:.25px #fff;">4287</div>
<div class="a" style="left:8.00px;top:516.50px;font-size:11px;line-height:14px;color:#e00000;transform-origin:0 50%;transform:scaleX(0.8421);">TOTAL</div>
<div class="a" style="left:10.5px;top:530.5px;width:130.5px;height:21.5px;background:#000;border:1.500px solid #8c8c8c;"></div>
<div class="a" style="left:49.50px;top:533.50px;font-size:13px;line-height:16px;color:#22e03a;transform-origin:0 50%;transform:scaleX(0.9163);">29 276.99</div>
<div class="a" style="left:152.00px;top:516.00px;font-size:11px;line-height:14px;color:#222;transform-origin:0 50%;transform:scaleX(0.8921);">Avoir remboursé &nbsp;:</div>
<div class="a" style="left:154.50px;top:535.50px;font-size:11.5px;line-height:14px;font-weight:bold;transform-origin:0 50%;transform:scaleX(0.8246);">Espèces</div>
<svg class="a" style="left:211.500px;top:536px" width="20" height="13" viewBox="0 0 20 13"><rect width="20" height="13" rx="1" fill="#000"/><rect x="2.500" y="2" width="15" height="9" rx="2.500" fill="#fff"/><circle cx="10" cy="6.500" r="3.300" fill="#000"/><rect x="9.300" y="4.500" width="1.400" height="4" fill="#fff"/></svg>
<div class="a" style="left:233px;top:531.5px;width:113px;height:21px;background:#ffffb4;border:1px solid #9a9a9a;"></div>
<div class="a" style="left:263.00px;top:534.00px;font-size:13px;line-height:16px;transform-origin:0 50%;transform:scaleX(0.9163);">29 276.99</div>
<div class="a" style="left:349.00px;top:535.50px;font-size:11.5px;line-height:14px;font-weight:bold;transform-origin:0 50%;transform:scaleX(0.9129);">Banque</div>
<svg class="a" style="left:407.500px;top:535px" width="20" height="15" viewBox="0 0 20 15"><rect width="20" height="15" rx="2.500" fill="#111"/><rect x="2.500" y="3" width="5" height="4" rx="1" fill="none" stroke="#ddd" stroke-width=".9"/><path d="M2.500 11h2M5.500 11h2M8.500 11h2" stroke="#ddd" stroke-width="1"/><rect x="12" y="9" width="5.500" height="3.500" rx="1.500" fill="none" stroke="#ddd" stroke-width=".9"/></svg>
<div class="a" style="left:431px;top:530.5px;width:119px;height:21.5px;background:#ffffb4;border:1px solid #9a9a9a;"></div>
<div class="a" style="left:478.00px;top:533.50px;font-size:13px;line-height:16px;transform-origin:0 50%;transform:scaleX(0.9481);">0.00</div>
<div class="a" style="left:558.5px;top:527.5px;width:109px;height:24px;background:#d9e3ee;border:1px solid #b5bcc6;"></div>
<div class="a" style="left:560px;top:529px;width:105px;height:20.5px;background:#4682b4;"></div>
<div class="a" style="left:563.00px;top:532.50px;font-size:10.5px;line-height:13px;font-weight:bold;color:#fff;transform-origin:0 50%;transform:scaleX(0.8043);-webkit-text-stroke:.25px #fff;">REMBOURSER</div>
<svg width="22" height="20" viewBox="0 0 28 28" style="position:absolute;left:641px;top:529px"><path d="M15 2l9-1 2 6-9 4z" fill="#7ac143" stroke="#4d8a24" stroke-width=".6"/><path d="M3 6c3-3 9-4 13-2l2 2-5 3-8 2z" fill="#f3c48a" stroke="#c08a50" stroke-width=".5"/><path d="M1 5l3-1 2 7-3 1z" fill="#222"/><path d="M18 8c-3 1-7 2-8 5 2 2 8 1 10 4l-3 3" fill="none" stroke="#5aa02c" stroke-width="3" stroke-linecap="round"/><path d="M7 20c3-2 8-3 12-1l3 2-5 4-9 0z" fill="#f3c48a" stroke="#c08a50" stroke-width=".5"/><path d="M21 19l4-1 2 8h-5z" fill="#1a1a1a"/></svg>
<!-- sec_viewer -->
<div class="a" style="left:781px;top:145px;width:816.5px;height:710.5px;background:#f0f0f0;border:1px solid #7d8896;box-shadow:0 2px 12px rgba(0,0,0,.28);"></div>
<div class="a" style="left:782px;top:146px;width:814.5px;height:25.5px;background:#fff;border-bottom:1px solid #9b9b9b;"></div>
<svg class="a" style="left:1490px;top:148px" width="104" height="20" viewBox="0 0 104 20"><path d="M8.500 10.500h9" stroke="#222" stroke-width="1"/><rect x="47.500" y="5.500" width="8" height="8" fill="none" stroke="#222" stroke-width="1"/><path d="M85 5.500l8.500 8.500M93.500 5.500l-8.500 8.500" stroke="#222" stroke-width="1.100"/></svg>
<div class="a" style="left:782px;top:172px;width:814.5px;height:44px;background:linear-gradient(#fdfdfd,#ececec);"></div>
<div class="a" style="left:783px;top:172px;width:22.5px;height:22px;background:#b9dcf6;border:1px solid #4aa3ea;"></div>
<svg class="a" style="left:783px;top:172px" width="330" height="22" viewBox="0 0 330 22"><path d="M4 14.500c2-2.500 4-2.500 5.500-1 1.500-2 4-2 5 0 1.500-1 3.500-.5 4.500 1.500v1.500h-15z" fill="#eef5fc" stroke="#5b82ad" stroke-width=".9"/><path d="M10 12v-6h6M14 4l2.500 2-2.500 2" fill="none" stroke="#3f6a9a" stroke-width="1"/><rect x="31" y="4" width="8" height="6" fill="#fff" stroke="#6d87a8" stroke-width=".8"/><rect x="28.500" y="9" width="13" height="7" rx="1" fill="#dfe8f3" stroke="#5d7798" stroke-width=".8"/><rect x="31" y="13.500" width="8" height="4" fill="#fff" stroke="#6d87a8" stroke-width=".7"/><rect x="38" y="9" width="3.500" height="7" fill="#4f6f9a"/><path d="M54 9a4.500 4.500 0 0 1 8-2.200M63 12.500a4.500 4.500 0 0 1-8 2.200" fill="none" stroke="#4a9ad8" stroke-width="1.300"/><path d="M60.500 4.500l2.500 3-3.500.5zM56.500 17l-2.500-3 3.500-.5z" fill="#4a9ad8"/><rect x="55.500" y="8.500" width="6" height="5" fill="#cfe6f8" stroke="#6aa8d8" stroke-width=".6"/><path d="M72.500 3v17M170.500 3v17" stroke="#b5b5b5" stroke-width="1"/><path d="M83 6v10" stroke="#c2c2c2" stroke-width="1.500"/><path d="M88.500 6v10l-5-5z" fill="#c2c2c2"/><path d="M112 6v10l-5-5z" fill="#c2c2c2"/><path d="M130.500 6v10l5-5z" fill="#c2c2c2"/><path d="M159.500 6v10" stroke="#c2c2c2" stroke-width="1.500"/><path d="M154 6v10l5-5z" fill="#c2c2c2"/><path d="M279 8c0-2 3-2 3 0v2h2v-2c0-2 3-2 3 0l2 7a2.500 2.500 0 0 1-5 0v-2h-2v2a2.500 2.500 0 0 1-5 0z" fill="#3f78c0" stroke="#1f4f8f" stroke-width=".7"/><circle cx="306" cy="9" r="4.500" fill="#d6ebfb" stroke="#3d86c8" stroke-width="1.400"/><path d="M304 9h4M306 7v4" stroke="#2b6cab" stroke-width="1.100"/><path d="M309.500 12.500l4 4" stroke="#c99a6a" stroke-width="2.200" stroke-linecap="round"/><path d="M319 10h5l-2.500 3z" fill="#222"/></svg>
<div class="a" style="left:957.5px;top:173.5px;width:82.5px;height:18.5px;background:#ebebeb;border:1px solid #b3b3b3;"></div>
<div class="a" style="left:961.00px;top:175.00px;font-size:11px;line-height:14px;color:#9a9a9a;">1</div>
<div class="a" style="left:1043.50px;top:176.00px;font-size:11px;line-height:14px;color:#222;transform-origin:0 50%;transform:scaleX(0.9252);">/1</div>
<div class="a" style="left:784px;top:196px;width:77.5px;height:20.5px;background:#fcfcfc;border-left:1.500px solid #8f8f8f;border-top:1.500px solid #b9b9b9;border-right:1px solid #c9c9c9;"></div>
<div class="a" style="left:865px;top:197px;width:1px;height:17px;background:#c2c2c2;"></div>
<div class="a" style="left:789.50px;top:198.50px;font-size:10px;line-height:12px;color:#111;transform-origin:0 50%;transform:scaleX(0.8927);">Rapport principal</div>
<div class="a" style="left:786px;top:216.5px;width:793px;height:615.5px;background:#ababab;border-top:1px solid #7f7f7f;border-left:1px solid #8f8f8f;"></div>
<div class="a" style="left:1579px;top:217px;width:15.5px;height:615px;background:#f0f0f0;border-left:1px solid #e2e2e2;"></div>
<div class="a" style="left:1580.5px;top:234px;width:13px;height:373.5px;background:#c1c1c1;"></div>
<svg class="a" style="left:1582px;top:221px" width="10" height="7" viewBox="0 0 10 7"><path d="M1.500 5.500l3.500-3.500 3.500 3.500" fill="none" stroke="#555" stroke-width="1.300"/></svg>
<svg class="a" style="left:1582px;top:821px" width="10" height="7" viewBox="0 0 10 7"><path d="M1.500 1.500l3.500 3.500 3.500-3.500" fill="none" stroke="#555" stroke-width="1.300"/></svg>
<div class="a" style="left:782px;top:832px;width:814.5px;height:23px;background:#f0f0f0;border-top:1px solid #d4d4d4;"></div>
<div class="a" style="left:785.00px;top:839.50px;font-size:10px;line-height:12px;color:#222;transform-origin:0 50%;transform:scaleX(0.9691);">Numéro de la page actuelle : 1</div>
<div class="a" style="left:1057.00px;top:839.50px;font-size:10px;line-height:12px;color:#222;transform-origin:0 50%;transform:scaleX(0.9863);">Nombre total de pages : 1</div>
<div class="a" style="left:1329.00px;top:839.50px;font-size:10px;line-height:12px;color:#222;transform-origin:0 50%;transform:scaleX(0.9591);">Facteur de zoom : 100%</div>
<div class="a" style="left:1053.5px;top:835px;width:1px;height:18px;background:#dcdcdc;"></div>
<div class="a" style="left:1325.5px;top:835px;width:1px;height:18px;background:#dcdcdc;"></div>
<!-- sec_report -->
<div class="a" style="left:851px;top:225px;width:662px;height:607px;background:#fff;border-left:1px solid #444;border-top:1px solid #222;"></div>
<div class="a" style="left:1512.5px;top:229px;width:4.5px;height:603px;background:#000;"></div>
<div class="a" style="left:871.5px;top:245.5px;width:620.5px;height:0;border-top:1px dotted #555"></div>
<div class="a" style="left:871.0px;top:246px;height:586px;width:0;border-left:1px dotted #555"></div>
<div class="a" style="left:1491.5px;top:246px;height:586px;width:0;border-left:1px dotted #777"></div>
<div class="a" style="left:874.00px;top:245.50px;font-size:10px;line-height:12px;font-weight:bold;color:#111;font-family:'DejaVu Sans','Liberation Sans',sans-serif;transform-origin:0 50%;transform:scaleX(0.9702);">Fact.Avoir Clients</div>
<div class="a" style="left:1324.00px;top:247.50px;font-size:10.5px;line-height:13px;font-weight:bold;color:#111;font-family:'DejaVu Sans','Liberation Sans',sans-serif;transform-origin:0 50%;transform:scaleX(0.9118);text-decoration:underline;">dimanche 26 septembre 2021</div>
<div class="a" style="left:1016px;top:275px;width:320.5px;height:30.5px;background:#000;"></div>
<div class="a" style="left:1013.5px;top:272px;width:320.5px;height:30.5px;background:#f0f0f0;border:1px solid #333;"></div>
<div class="a" style="left:1022.00px;top:271.00px;font-size:23.5px;line-height:29px;color:#111;transform-origin:0 50%;transform:scaleX(0.9618);">FACTURE &nbsp;D&#x27;AVOIR CLIENT</div>
<div class="a" style="left:871.5px;top:315.5px;width:620.5px;height:1px;background:#2a2a2a;"></div>
<div class="a" style="left:871.5px;top:376.0px;width:620.5px;height:1px;background:#2a2a2a;"></div>
<div class="a" style="left:1491.0px;top:316px;width:1px;height:61px;background:#2a2a2a;"></div>
<div class="a" style="left:872px;top:334.0px;width:619px;height:0;border-top:1px dotted #777"></div>
<div class="a" style="left:872px;top:349.0px;width:619px;height:0;border-top:1px dotted #777"></div>
<div class="a" style="left:872px;top:364.0px;width:619px;height:0;border-top:1px dotted #777"></div>
<div class="a" style="left:874.00px;top:320.00px;font-size:10px;line-height:12px;color:#222;transform-origin:0 50%;transform:scaleX(0.8431);">FACTURE N°:</div>
<div class="a" style="left:961.50px;top:320.00px;font-size:9.5px;line-height:12px;color:#222;">:</div>
<div class="a" style="left:874.00px;top:333.50px;font-size:10px;line-height:12px;color:#222;transform-origin:0 50%;transform:scaleX(0.8047);">Date</div>
<div class="a" style="left:961.50px;top:333.50px;font-size:9.5px;line-height:12px;color:#222;">:</div>
<div class="a" style="left:874.00px;top:348.00px;font-size:10px;line-height:12px;color:#222;transform-origin:0 50%;transform:scaleX(0.9147);">Heure :</div>
<div class="a" style="left:961.50px;top:348.00px;font-size:9.5px;line-height:12px;color:#222;">:</div>
<div class="a" style="left:874.00px;top:363.00px;font-size:10px;line-height:12px;color:#222;transform-origin:0 50%;transform:scaleX(0.8993);">Etablie par :</div>
<div class="a" style="left:961.50px;top:363.00px;font-size:9.5px;line-height:12px;color:#222;">:</div>
<div class="a" style="left:968.00px;top:320.00px;font-size:11.5px;line-height:14px;font-weight:bold;color:#111;transform-origin:0 50%;transform:scaleX(0.9846);">Fre N°:2021-000025</div>
<div class="a" style="left:968.00px;top:333.50px;font-size:10px;line-height:12px;color:#222;transform-origin:0 50%;transform:scaleX(0.8749);">26-sept.-2021</div>
<div class="a" style="left:968.00px;top:348.00px;font-size:10px;line-height:12px;color:#222;transform-origin:0 50%;transform:scaleX(0.8989);">16:45:54</div>
<div class="a" style="left:968.00px;top:363.00px;font-size:10px;line-height:12px;color:#222;transform-origin:0 50%;transform:scaleX(0.8991);">admin</div>
<div class="a" style="left:1107.50px;top:320.00px;font-size:10px;line-height:12px;color:#222;transform-origin:0 50%;transform:scaleX(0.8832);">Nom du client</div>
<div class="a" style="left:1227.50px;top:320.00px;font-size:9.5px;line-height:12px;color:#222;">:</div>
<div class="a" style="left:1107.50px;top:333.50px;font-size:10px;line-height:12px;color:#222;transform-origin:0 50%;transform:scaleX(0.8313);">Adresse</div>
<div class="a" style="left:1227.50px;top:333.50px;font-size:9.5px;line-height:12px;color:#222;">:</div>
<div class="a" style="left:1107.50px;top:348.00px;font-size:10px;line-height:12px;color:#222;transform-origin:0 50%;transform:scaleX(0.8780);">Téléphone</div>
<div class="a" style="left:1227.50px;top:348.00px;font-size:9.5px;line-height:12px;color:#222;">:</div>
<div class="a" style="left:1234.00px;top:321.00px;font-size:11.5px;line-height:14px;font-weight:bold;color:#111;transform-origin:0 50%;transform:scaleX(0.9387);">Sarl Métal Pro</div>
<div class="a" style="left:1234.00px;top:333.50px;font-size:10px;line-height:12px;color:#222;transform-origin:0 50%;transform:scaleX(0.8873);">Rue de la Liberté 16.000 Alger centre</div>
<div class="a" style="left:1234.00px;top:348.00px;font-size:10px;line-height:12px;color:#222;transform-origin:0 50%;transform:scaleX(0.8820);">021.12.56.17</div>
<div class="a" style="left:871.5px;top:377.5px;width:620.5px;height:1px;background:#2a2a2a;"></div>
<div class="a" style="left:871.5px;top:400.4px;width:620.5px;height:1.2px;background:#2a2a2a;"></div>
<div class="a" style="left:871.5px;top:403.0px;width:620.5px;height:1px;background:#2a2a2a;"></div>
<div class="a" style="left:871.5px;top:421.5px;width:620.5px;height:1px;background:#2a2a2a;"></div>
<div class="a" style="left:872px;top:423.0px;width:619px;height:0;border-top:1px dotted #777"></div>
<div class="a" style="left:1100.0px;top:378px;width:1px;height:44px;background:#2a2a2a;"></div>
<div class="a" style="left:1176.0px;top:378px;width:1px;height:44px;background:#2a2a2a;"></div>
<div class="a" style="left:1249.0px;top:378px;width:1px;height:44px;background:#2a2a2a;"></div>
<div class="a" style="left:1331.0px;top:378px;width:1px;height:44px;background:#2a2a2a;"></div>
<div class="a" style="left:1407.5px;top:378px;width:1px;height:44px;background:#2a2a2a;"></div>
<div class="a" style="left:1491.0px;top:378px;width:1px;height:44px;background:#2a2a2a;"></div>
<div class="a" style="left:942.50px;top:380.00px;font-size:11.5px;line-height:14px;font-weight:bold;color:#111;transform-origin:0 50%;transform:scaleX(0.9265);">Libellé de l&#x27;article</div>
<div class="a" style="left:1115.25px;top:380.00px;font-size:11.5px;line-height:14px;font-weight:bold;color:#111;transform-origin:0 50%;transform:scaleX(0.9541);">Quantité</div>
<div class="a" style="left:1203.00px;top:380.00px;font-size:11.5px;line-height:14px;font-weight:bold;color:#111;transform-origin:0 50%;transform:scaleX(0.9481);">U.M</div>
<div class="a" style="left:1257.75px;top:380.00px;font-size:11.5px;line-height:14px;font-weight:bold;color:#111;transform-origin:0 50%;transform:scaleX(0.9403);">Prix unitaire</div>
<div class="a" style="left:1359.00px;top:378.50px;font-size:11.5px;line-height:14px;font-weight:bold;color:#111;transform-origin:0 50%;transform:scaleX(0.8467);">TVA:</div>
<div class="a" style="left:1422.75px;top:380.00px;font-size:11.5px;line-height:14px;font-weight:bold;color:#111;transform-origin:0 50%;transform:scaleX(0.9438);">Prix Vente</div>
<div class="a" style="left:873.00px;top:406.50px;font-size:11px;line-height:14px;color:#222;transform-origin:0 50%;transform:scaleX(0.9183);">Pneus Michelin 165*15*65</div>
<div class="a" style="left:1128.00px;top:406.50px;font-size:11px;line-height:14px;color:#222;transform-origin:0 50%;transform:scaleX(0.9336);">2,00</div>
<div class="a" style="left:1196.00px;top:406.50px;font-size:11px;line-height:14px;color:#222;transform-origin:0 50%;transform:scaleX(0.9347);">Unité(s)</div>
<div class="a" style="left:1282.00px;top:406.50px;font-size:11px;line-height:14px;color:#222;transform-origin:0 50%;transform:scaleX(0.9502);">12 500.85</div>
<div class="a" style="left:1363.50px;top:406.50px;font-size:11px;line-height:14px;color:#222;transform-origin:0 50%;transform:scaleX(0.9807);">4 275.29</div>
<div class="a" style="left:1440.50px;top:406.50px;font-size:11px;line-height:14px;color:#222;transform-origin:0 50%;transform:scaleX(0.9093);">25 001,70</div>
<div class="a" style="left:872px;top:426px;width:205px;height:74px;border:1.500px solid #333;"></div>
<div class="a" style="left:885.00px;top:427.00px;font-size:10px;line-height:12px;font-weight:bold;color:#111;font-family:'DejaVu Sans','Liberation Sans',sans-serif;transform-origin:0 50%;transform:scaleX(0.8856);">Mode de remboursement de l&#x27;avoir</div>
<div class="a" style="left:873px;top:440.5px;width:203px;height:0;border-top:1px dotted #777"></div>
<div class="a" style="left:873px;top:457.5px;width:203px;height:0;border-top:1px dotted #999"></div>
<div class="a" style="left:873px;top:470.5px;width:203px;height:0;border-top:1px dotted #999"></div>
<div class="a" style="left:972.0px;top:441px;height:58px;width:0;border-left:1px dotted #777"></div>
<div class="a" style="left:873px;top:474.0px;width:203px;height:1px;background:#2a2a2a;"></div>
<div class="a" style="left:879.50px;top:443.50px;font-size:9.5px;line-height:12px;color:#222;transform-origin:0 50%;transform:scaleX(0.8508);">Espèces</div>
<div class="a" style="left:879.50px;top:456.50px;font-size:9.5px;line-height:12px;color:#222;transform-origin:0 50%;transform:scaleX(0.9156);">Banque</div>
<div class="a" style="left:962.50px;top:445.00px;font-size:10px;line-height:12px;font-weight:bold;color:#222;">:</div>
<div class="a" style="left:962.50px;top:458.00px;font-size:10px;line-height:12px;font-weight:bold;color:#222;">:</div>
<div class="a" style="left:1018.00px;top:444.50px;font-size:10px;line-height:12px;font-weight:bold;color:#111;font-family:'DejaVu Sans','Liberation Sans',sans-serif;transform-origin:0 50%;transform:scaleX(0.9107);">29 276,99</div>
<div class="a" style="left:1046.00px;top:458.00px;font-size:10px;line-height:12px;font-weight:bold;color:#111;font-family:'DejaVu Sans','Liberation Sans',sans-serif;transform-origin:0 50%;transform:scaleX(0.9114);">0,00</div>
<div class="a" style="left:880.50px;top:479.00px;font-size:9.5px;line-height:12px;font-weight:bold;color:#111;font-family:'DejaVu Sans','Liberation Sans',sans-serif;transform-origin:0 50%;transform:scaleX(0.8201);">Solde</div>
<div class="a" style="left:962.50px;top:479.50px;font-size:10px;line-height:12px;font-weight:bold;color:#222;">:</div>
<div class="a" style="left:976px;top:476.5px;width:98px;height:18.5px;background:#e4e4e4;"></div>
<div class="a" style="left:1046.00px;top:476.00px;font-size:10px;line-height:12px;font-weight:bold;color:#111;font-family:'DejaVu Sans','Liberation Sans',sans-serif;transform-origin:0 50%;transform:scaleX(0.9114);">0,00</div>
<div class="a" style="left:1117.50px;top:425.00px;font-size:11px;line-height:14px;font-weight:bold;color:#111;transform-origin:0 50%;transform:scaleX(1.0045);text-decoration:underline;">Cachet &amp; Signature </div>
<div class="a" style="left:1264.5px;top:426.5px;width:227.5px;height:1px;background:#2a2a2a;"></div>
<div class="a" style="left:1264.5px;top:488.0px;width:227.5px;height:1px;background:#2a2a2a;"></div>
<div class="a" style="left:1264.0px;top:427px;width:1px;height:61.5px;background:#2a2a2a;"></div>
<div class="a" style="left:1491.0px;top:427px;width:1px;height:61.5px;background:#2a2a2a;"></div>
<div class="a" style="left:1331.0px;top:427px;width:1px;height:38.5px;background:#2a2a2a;"></div>
<div class="a" style="left:1408.0px;top:427px;width:1px;height:61.5px;background:#2a2a2a;"></div>
<div class="a" style="left:1267px;top:428.5px;width:62px;height:15px;background:#e6e6e6;border:1.500px solid #444;"></div>
<div class="a" style="left:1265px;top:445.0px;width:226px;height:0;border-top:1px dotted #444"></div>
<div class="a" style="left:1265px;top:465.0px;width:226px;height:0;border-top:1px dotted #444"></div>
<div class="a" style="left:1334px;top:447px;width:73px;height:15.5px;background:#ececec;"></div>
<div class="a" style="left:1411px;top:447px;width:79px;height:15.5px;background:#f3f3f3;"></div>
<div class="a" style="left:1412px;top:468.5px;width:78.5px;height:18.5px;background:#e4e4e4;"></div>
<div class="a" style="left:1337.50px;top:428.50px;font-size:11px;line-height:14px;font-weight:bold;color:#111;transform-origin:0 50%;transform:scaleX(1.0095);">TOTAL T.V.A</div>
<div class="a" style="left:1412.75px;top:428.50px;font-size:11px;line-height:14px;font-weight:bold;color:#111;transform-origin:0 50%;transform:scaleX(0.9750);">Montant Total</div>
<div class="a" style="left:1271.00px;top:447.50px;font-size:11px;line-height:14px;font-weight:bold;color:#111;transform-origin:0 50%;transform:scaleX(0.9531);">Totaux :</div>
<div class="a" style="left:1363.50px;top:447.50px;font-size:11px;line-height:14px;font-weight:bold;color:#111;transform-origin:0 50%;transform:scaleX(0.9923);">4 275.29</div>
<div class="a" style="left:1440.50px;top:447.50px;font-size:11px;line-height:14px;font-weight:bold;color:#111;transform-origin:0 50%;transform:scaleX(0.9911);">25 001.70</div>
<div class="a" style="left:1267.00px;top:467.50px;font-size:11.5px;line-height:14px;font-weight:bold;color:#111;transform-origin:0 50%;transform:scaleX(0.9475);">TOTAL AVOIR CLIENT &nbsp;:</div>
<div class="a" style="left:1432.50px;top:466.50px;font-size:12px;line-height:15px;font-weight:bold;color:#111;transform-origin:0 50%;transform:scaleX(0.9927);">29 276,99</div>
<div class="a" style="left:872.00px;top:523.00px;font-size:8px;line-height:10px;color:#222;transform-origin:0 50%;transform:scaleX(0.9141);">* Copie de l&#x27;avoir destinée au client</div>
<div class="a" style="left:871.5px;top:540.0px;width:620.5px;height:0;border-top:1px dashed #111"></div>
<div class="a" style="left:1374.50px;top:547.00px;font-size:8.5px;line-height:11px;color:#222;transform-origin:0 50%;transform:scaleX(1.0390);">26-sept.-2021</div>
<div class="a" style="left:876.00px;top:563.00px;font-size:10.5px;line-height:13px;font-weight:bold;color:#111;transform-origin:0 50%;transform:scaleX(1.0210);">Sarl Métal Pro</div>
<div class="a" style="left:878.00px;top:578.50px;font-size:10.5px;line-height:13px;font-weight:bold;color:#111;transform-origin:0 50%;transform:scaleX(1.0784);">Fre N°:2021-000025</div>
<div class="a" style="left:1008px;top:584px;width:290.5px;height:30px;background:#9a9a9a;"></div>
<div class="a" style="left:1005.5px;top:581.5px;width:290.5px;height:30px;background:#efefef;border:1px solid #555;"></div>
<div class="a" style="left:1010.50px;top:583.50px;font-size:16.5px;line-height:21px;font-weight:bold;color:#111;transform-origin:0 50%;transform:scaleX(1.0701);">Bulletin d&#x27;imputation Comptable</div>
<div class="a" style="left:874px;top:629.0px;width:614.5px;height:1px;background:#2a2a2a;"></div>
<div class="a" style="left:874px;top:668.0px;width:614.5px;height:1px;background:#2a2a2a;"></div>
<div class="a" style="left:878px;top:800.0px;width:610.5px;height:1px;background:#2a2a2a;"></div>
<div class="a" style="left:873.5px;top:629.5px;width:1px;height:202.5px;background:#2a2a2a;"></div>
<div class="a" style="left:934.0px;top:629.5px;width:1px;height:202.5px;background:#2a2a2a;"></div>
<div class="a" style="left:990.0px;top:629.5px;width:1px;height:202.5px;background:#2a2a2a;"></div>
<div class="a" style="left:1317.0px;top:629.5px;width:1px;height:202.5px;background:#2a2a2a;"></div>
<div class="a" style="left:1404.0px;top:629.5px;width:1px;height:202.5px;background:#2a2a2a;"></div>
<div class="a" style="left:1488.0px;top:629.5px;width:1px;height:202.5px;background:#2a2a2a;"></div>
<div class="a" style="left:878px;top:688.5px;width:610px;height:0;border-top:1px dotted #888"></div>
<div class="a" style="left:878px;top:709.0px;width:610px;height:0;border-top:1px dotted #888"></div>
<div class="a" style="left:878px;top:730.0px;width:610px;height:0;border-top:1px dotted #888"></div>
<div class="a" style="left:878px;top:751.0px;width:610px;height:0;border-top:1px dotted #888"></div>
<div class="a" style="left:878px;top:774.5px;width:610px;height:0;border-top:1px dotted #888"></div>
<div class="a" style="left:878px;top:796.0px;width:610px;height:0;border-top:1px dotted #888"></div>
<div class="a" style="left:879.50px;top:633.00px;font-size:12px;line-height:15px;font-weight:bold;color:#111;transform-origin:0 50%;transform:scaleX(0.9933);">Comptes</div>
<div class="a" style="left:886.00px;top:647.50px;font-size:12px;line-height:15px;font-weight:bold;color:#111;transform-origin:0 50%;transform:scaleX(1.0358);">Débits</div>
<div class="a" style="left:937.00px;top:633.00px;font-size:12px;line-height:15px;font-weight:bold;color:#111;transform-origin:0 50%;transform:scaleX(0.9933);">Comptes</div>
<div class="a" style="left:941.00px;top:647.50px;font-size:12px;line-height:15px;font-weight:bold;color:#111;transform-origin:0 50%;transform:scaleX(1.0401);">Crédits</div>
<div class="a" style="left:1333.75px;top:635.50px;font-size:12px;line-height:15px;font-weight:bold;color:#111;transform-origin:0 50%;transform:scaleX(1.0032);">Montants</div>
<div class="a" style="left:1341.75px;top:650.00px;font-size:12px;line-height:15px;font-weight:bold;color:#111;transform-origin:0 50%;transform:scaleX(1.0221);">Débits</div>
<div class="a" style="left:1417.25px;top:635.50px;font-size:12px;line-height:15px;font-weight:bold;color:#111;transform-origin:0 50%;transform:scaleX(1.0032);">Montants</div>
<div class="a" style="left:1422.75px;top:650.00px;font-size:12px;line-height:15px;font-weight:bold;color:#111;transform-origin:0 50%;transform:scaleX(1.0280);">Crédits</div>
<div class="a" style="left:1045.50px;top:637.50px;font-size:12.5px;line-height:16px;font-weight:bold;color:#111;transform-origin:0 50%;transform:scaleX(1.0550);">Libellé de l&#x27;opération comptable</div>
<div class="a" style="left:880.00px;top:672.50px;font-size:12px;line-height:15px;color:#333;transform-origin:0 50%;transform:scaleX(1.0067);">70..........</div>
<div class="a" style="left:880.00px;top:692.50px;font-size:12px;line-height:15px;color:#333;transform-origin:0 50%;transform:scaleX(0.9891);">4457.......</div>
<div class="a" style="left:937.50px;top:781.00px;font-size:12px;line-height:15px;color:#333;transform-origin:0 50%;transform:scaleX(0.9666);">411.........</div>
<div class="a" style="left:992.50px;top:676.50px;font-size:10px;line-height:12px;color:#222;font-family:'DejaVu Sans Condensed','Liberation Sans',sans-serif;transform-origin:0 50%;transform:scaleX(1.0615);">Const avoir client : Fre N°:2021-000025 Sarl Métal Pro</div>
<div class="a" style="left:993.50px;top:695.50px;font-size:10px;line-height:12px;color:#222;font-family:'DejaVu Sans Condensed','Liberation Sans',sans-serif;transform-origin:0 50%;transform:scaleX(1.0656);">Const avoir client : Fre N°:2021-000025 Sarl Métal Pro</div>
<div class="a" style="left:993.00px;top:783.50px;font-size:10px;line-height:12px;color:#222;font-family:'DejaVu Sans Condensed','Liberation Sans',sans-serif;transform-origin:0 50%;transform:scaleX(1.0592);">Const avoir client : &nbsp;Fre N°:2021-000025 &nbsp;Sarl Métal Pro</div>
<div class="a" style="left:1354.50px;top:674.50px;font-size:10px;line-height:12px;font-weight:bold;color:#111;font-family:'DejaVu Sans Condensed','Liberation Sans',sans-serif;transform-origin:0 50%;transform:scaleX(0.9529);">25 001.70</div>
<div class="a" style="left:1360.50px;top:694.00px;font-size:10px;line-height:12px;font-weight:bold;color:#111;font-family:'DejaVu Sans Condensed','Liberation Sans',sans-serif;transform-origin:0 50%;transform:scaleX(0.9522);">4 275.29</div>
<div class="a" style="left:1430.50px;top:781.00px;font-size:10px;line-height:12px;color:#222;font-family:'DejaVu Sans Condensed','Liberation Sans',sans-serif;transform-origin:0 50%;transform:scaleX(1.0375);">29 276,99</div>
<div class="a" style="left:1264.50px;top:807.00px;font-size:12.5px;line-height:16px;font-weight:bold;color:#111;transform-origin:0 50%;transform:scaleX(0.9541);">Totaux :</div>
<div class="a" style="left:1342.00px;top:809.50px;font-size:10.5px;line-height:13px;font-weight:bold;color:#111;font-family:'DejaVu Sans','Liberation Sans',sans-serif;transform-origin:0 50%;transform:scaleX(0.9014);">29 276,99</div>
<div class="a" style="left:1423.00px;top:809.50px;font-size:10.5px;line-height:13px;font-weight:bold;color:#111;font-family:'DejaVu Sans','Liberation Sans',sans-serif;transform-origin:0 50%;transform:scaleX(0.9014);">29 276,99</div>
<!-- sec_taskbar -->
<div class="a" style="left:3px;top:856px;width:1594px;height:1.5px;background:#eef2f6;"></div>
<div class="a" style="left:3px;top:857px;width:1594px;height:6.5px;background:#bdbdbd;"></div>
<div class="a" style="left:3px;top:863px;width:1594px;height:1.5px;background:#f4f4f4;"></div>
<div class="a" style="left:0px;top:864.5px;width:1600px;height:2px;background:#1d4a54;"></div>
<div class="a" style="left:0px;top:0px;width:3px;height:866px;background:#1b5560;"></div>
<div class="a" style="left:1597px;top:0px;width:3px;height:866px;background:#1e6e7c;"></div>
<div class="a" style="left:2px;top:21px;width:2px;height:845px;background:#e9e9e9;"></div>
<div class="a" style="left:0px;top:866px;width:1600px;height:34px;background:#17282f;"></div>
<svg class="a" style="left:13px;top:876px" width="15" height="15" viewBox="0 0 15 15"><path d="M0 2.200l6-.9v5.700H0zM7 1.200l8-1.200v7H7zM0 8h6v5.700l-6-.9zM7 8h8v7l-8-1.200z" fill="#fff"/></svg>
<div class="a" style="left:40px;top:867px;width:286.5px;height:33px;background:#f1f1f1;"></div>
<svg class="a" style="left:49px;top:876px" width="16" height="16" viewBox="0 0 16 16"><circle cx="9.500" cy="6" r="4.500" fill="none" stroke="#222" stroke-width="1.300"/><path d="M6.300 9.300L1 15" stroke="#222" stroke-width="1.400"/></svg>
<div class="a" style="left:73.00px;top:875.50px;font-size:13.5px;line-height:17px;color:#4a4a4a;transform-origin:0 50%;transform:scaleX(0.9107);">Taper ici pour rechercher</div>
<svg class="a" style="left:326px;top:866px" width="880" height="34" viewBox="326 0 880 34"><circle cx="346.500" cy="17.500" r="5.500" fill="none" stroke="#fff" stroke-width="1.700"/><path d="M381.500 12.500h8v9h-8zM380 10.500v1M391.500 10.500v1M380 23v1M391.500 23v1" fill="none" stroke="#fff" stroke-width="1.200"/><path d="M392.500 12v3M392.500 18v5" stroke="#fff" stroke-width="1.300"/><path d="M380 10.500h11M380 24h11" stroke="#fff" stroke-width="1"/><circle cx="428.500" cy="17" r="10" fill="#1f8fd8"/><path d="M420 22a9 9 0 0 0 17-3c-3 3-9 2-9-3 0-2 2-4 4-4-5-3-13 1-12 10z" fill="#35c1b0"/><path d="M428.500 7a10 10 0 0 1 10 9c0 3-3 4-5 3 1-4-3-8-8-6-3 1-5 4-5 7a10 10 0 0 1 8-13z" fill="#1678c8"/><circle cx="429.500" cy="18" r="3.300" fill="#17282f"/><path d="M460 8h7l2 2h10v15h-19z" fill="#f4b52e"/><rect x="460" y="12" width="19" height="13" fill="#ffd35a"/><rect x="465" y="19" width="9" height="6" fill="#3f8fe0"/><rect x="467" y="21" width="5" height="4" fill="#ffd35a"/><ellipse cx="509" cy="19" rx="9.500" ry="8" fill="#d8d4cc" transform="rotate(-20 509 19)"/><circle cx="504" cy="17" r="1.800" fill="#e03a3a"/><circle cx="508" cy="14" r="1.800" fill="#3a8fe0"/><circle cx="513" cy="15" r="1.800" fill="#3ac05a"/><circle cx="506" cy="22" r="1.800" fill="#e0c03a"/><circle cx="512.500" cy="21.500" r="2.300" fill="#17282f"/><path d="M513 19l6-11" stroke="#c98a4a" stroke-width="2.200"/><path d="M518.500 9l1.500-3" stroke="#e8e0d0" stroke-width="2.200"/><path d="M548 7l13 2v12l-13-2z" fill="#3aa0e8"/><path d="M549.500 9l10 1.500v9l-10-1.500z" fill="#6cc0f5"/><path d="M543 23l9-2 9 3-9 2z" fill="#e0e0e0"/><path d="M553 20h3v3h-3z" fill="#bbb"/><rect x="587" y="7" width="16" height="20" rx="1" fill="#2b7cd3"/><rect x="590" y="7" width="13" height="5" fill="#41a5ee"/><rect x="590" y="17" width="13" height="5" fill="#185abd"/><rect x="582" y="11" width="11" height="11" rx="1" fill="#185abd"/><text x="587.500" y="20.500" font-size="8.500" font-weight="bold" fill="#fff" text-anchor="middle" font-family="Liberation Sans, sans-serif">W</text><path d="M628 8l12-1 3 18-18 1z" fill="#cfe3ee"/><path d="M630 10l9-1 2.500 14-14 1z" fill="#9fc6d8"/><path d="M625 26l18-1v1.500l-18 1z" fill="#8a9aa5"/><rect x="668" y="7" width="16" height="20" rx="1" fill="#21a366"/><rect x="671" y="7" width="13" height="5" fill="#33c481"/><rect x="671" y="17" width="13" height="5" fill="#107c41"/><rect x="663" y="11" width="11" height="11" rx="1" fill="#107c41"/><text x="668.500" y="20.500" font-size="8.500" font-weight="bold" fill="#fff" text-anchor="middle" font-family="Liberation Sans, sans-serif">X</text><circle cx="714.500" cy="18" r="9.500" fill="#ff9a1e"/><path d="M707 11c2-3 5-5 7-5-1 2 0 3 2 4 4 1 7 4 7 8a9 9 0 0 1-17 3c-1-4 0-8 1-10z" fill="#ff5a2a"/><circle cx="715" cy="18.500" r="4.800" fill="#7a3fd0"/><path d="M711 15c2-2 6-1 7 1-2 0-3 1-4 2z" fill="#ffb01e"/><rect x="745.500" y="7" width="20" height="20" rx="1.500" fill="#ef3b2d"/><path d="M751 17l4-4 4 4-4 4zM757.500 12.500l4.500 4.500-4.500 4.500 1.200 1.200 5.700-5.700-5.700-5.700z" fill="#fff"/><rect x="786" y="7" width="20" height="20" rx="2.500" fill="#0e6fd8"/><circle cx="796" cy="17" r="7.500" fill="#fff"/><path d="M790 17l3.500-3v2h5v-2l3.500 3-3.500 3v-2h-5v2z" fill="#0e6fd8"/><rect x="828" y="7" width="6" height="8" fill="#e8b82a"/><path d="M836 9h9v9" fill="none" stroke="#9ab" stroke-width="1" stroke-dasharray="1.500 1.500"/><path d="M831 14l13 12M845 14l-12 12" stroke="#b8bec6" stroke-width="2.500"/><path d="M841 22l4 4" stroke="#3a6fd0" stroke-width="3"/><path d="M868 13l3-1.500 8 6.500 6-9 3 1.500v15l-3 1.500-6-9-8 6.500-3-1.500 5-5.500z" fill="#8a4fd0"/><path d="M885 9l3 1.500v15l-3 1.500z" fill="#6a34b0"/><path d="M913 9c2-2 4 0 6 0s4-2 6 0c2 3 0 7-1 10s-1 7-2.500 7-1.500-5-2.500-5-1 5-2.500 5-1.500-4-2.500-7-3-7-1-10z" fill="#eaf6ff" stroke="#8ec6ee" stroke-width=".8"/><circle cx="960" cy="18" r="10.500" fill="#8ab52a"/><circle cx="960" cy="18" r="8" fill="#a5cc3a"/><rect x="957" y="11" width="4.500" height="13" rx="1.500" fill="#e8543a"/><rect x="961" y="13" width="2.500" height="9" fill="#c0d84a"/><rect x="992" y="8" width="7" height="7" fill="#c8b890"/><rect x="1000" y="7" width="9" height="9" fill="#7ab0c8"/><rect x="990" y="16" width="20" height="7" fill="#b8bec4"/><rect x="989" y="23" width="22" height="4" fill="#8a9096"/><rect x="997" y="24" width="6" height="2" fill="#e8e8e8"/><path d="M993 18h14M993 20.500h14" stroke="#6a7076" stroke-width="1"/><path d="M1031 13l10.500-6 10.500 6v2h-21z" fill="#f1f1f1"/><rect x="1033" y="15.500" width="2.600" height="8" fill="#f1f1f1"/><rect x="1037.500" y="15.500" width="2.600" height="8" fill="#f1f1f1"/><rect x="1042" y="15.500" width="2.600" height="8" fill="#f1f1f1"/><rect x="1046.500" y="15.500" width="2.600" height="8" fill="#f1f1f1"/><rect x="1031" y="24" width="21" height="2.500" fill="#f1f1f1"/><circle cx="1041.500" cy="11.500" r="1.300" fill="#17282f"/><circle cx="1078" cy="21" r="5" fill="#080808"/><circle cx="1078" cy="21" r="6.300" fill="none" stroke="#080808" stroke-width="2.300" stroke-dasharray="2.500 2.400"/><circle cx="1088" cy="12.500" r="3.500" fill="#080808"/><circle cx="1088" cy="12.500" r="4.600" fill="none" stroke="#080808" stroke-width="2" stroke-dasharray="2 1.800"/><circle cx="1078" cy="21" r="1.800" fill="#17282f"/><circle cx="1088" cy="12.500" r="1.300" fill="#17282f"/><circle cx="1090" cy="23" r="2.600" fill="#080808"/><path d="M1113 10c0-2 2-3.500 4-3.500h12c2 0 4 1.500 4 3.500v10c0 2-2 3.500-4 3.500h-6l-4 4v-4h-2c-2 0-4-1.500-4-3.500z" fill="#f3efff"/><path d="M1115 11c0-1.500 1.500-2.500 3-2.500h10c1.500 0 3 1 3 2.500v8c0 1.500-1.500 2.500-3 2.500h-6l-2.500 2.500v-2.500h-1.500c-1.500 0-3-1-3-2.500z" fill="#7b52d8"/><path d="M1119.500 11.500c-.6-.6-1.500 0-1.700.7-.4 1.500.8 3.600 2.400 5.200s3.900 2.700 5.300 2.200c.7-.3 1.200-1.200.6-1.700l-1.500-1c-.5-.3-.9.300-1.300.6-.4.200-1.500-.5-2.300-1.400s-1.500-2-1.200-2.400c.3-.4.900-.7.700-1.200z" fill="#fff"/><rect x="1107" y="32" width="33" height="2" fill="#76b9ed"/><rect x="1144" y="0" width="40.500" height="34" fill="#3d4c53"/><rect x="1144" y="32" width="40.500" height="2" fill="#76b9ed"/><rect x="1156" y="7" width="17" height="17" fill="#f5f0ea" stroke="#c44" stroke-width="1.200"/><path d="M1163 11h8v10M1167 11v10M1163 16h8" stroke="#d55" stroke-width="1"/><circle cx="1160" cy="15" r="3" fill="#e8b88a"/><path d="M1155 25c0-5 2-6.500 5-6.500s5 1.500 5 6.500z" fill="#d8d8e0"/><ellipse cx="1170" cy="23.500" rx="5" ry="3.500" fill="#e8b52a"/><ellipse cx="1170" cy="22.500" rx="5" ry="3" fill="#f5d35a"/></svg>
<svg class="a" style="left:1320px;top:866px" width="280" height="34" viewBox="1320 0 280 34"><circle cx="1336" cy="16.500" r="7.800" fill="#f8c030"/><path d="M1337.500 23a3 3 0 0 1 .3-6 3.800 3.800 0 0 1 7.200.8 2.600 2.600 0 0 1-.4 5.200z" fill="#e4eaf0"/><path d="M1393 20l5-5 5 5" fill="none" stroke="#fff" stroke-width="1.400"/><rect x="1414.500" y="14" width="9" height="6" fill="none" stroke="#fff" stroke-width="1.100"/><rect x="1416" y="15.500" width="6" height="3" fill="#fff"/><path d="M1411.500 11.500h3v3h-3zM1413 14.500v5h1.500" fill="none" stroke="#fff" stroke-width="1"/><path d="M1434 22a9 9 0 0 1 9-9M1437 22a6 6 0 0 1 6-6M1440 22a3 3 0 0 1 3-3" fill="none" stroke="#fff" stroke-width="1.200"/><circle cx="1442.500" cy="22" r="1.200" fill="#fff"/><path d="M1452 15h2.500l3.500-3.500v11l-3.500-3.500h-2.500z" fill="none" stroke="#fff" stroke-width="1.100"/><path d="M1460 14a4 4 0 0 1 0 6M1462 12a7 7 0 0 1 0 10" fill="none" stroke="#9aa" stroke-width="1"/><path d="M1566 9h13v10h-8l-3 3v-3h-2z" fill="#fff"/><path d="M1568.500 12h8M1568.500 14.500h8M1568.500 17h5" stroke="#17282f" stroke-width="1"/><circle cx="1579" cy="23" r="5.300" fill="#17282f" stroke="#cfd6da" stroke-width="1"/><path d="M1596.500 0v34" stroke="#5a6a70" stroke-width="1"/></svg>
<div class="a" style="left:1353.50px;top:876.00px;font-size:12.5px;line-height:16px;color:#fff;transform-origin:0 50%;transform:scaleX(0.8412);">29°C</div>
<div class="a" style="left:1473.50px;top:876.00px;font-size:11px;line-height:14px;color:#fff;transform-origin:0 50%;transform:scaleX(0.7727);">FRA</div>
<div class="a" style="left:1515.50px;top:868.50px;font-size:11px;line-height:14px;color:#fff;transform-origin:0 50%;transform:scaleX(0.8173);">16:47</div>
<div class="a" style="left:1503.00px;top:883.00px;font-size:11px;line-height:14px;color:#fff;transform-origin:0 50%;transform:scaleX(0.8627);">26/09/2021</div>
<div class="a" style="left:1576.49px;top:883.50px;font-size:9px;line-height:11px;font-weight:bold;color:#fff;">6</div>
<div class="a" style="left:651.50px;top:419.50px;font-size:46px;line-height:56px;font-weight:bold;color:#f5c518;transform-origin:0 50%;transform:scaleX(0.8464);opacity:.5;-webkit-text-stroke:1.6px currentColor;filter:blur(.4px);">Oued</div>
<div class="a" style="left:755.50px;top:419.50px;font-size:46px;line-height:56px;font-weight:bold;color:#4aa3df;transform-origin:0 50%;transform:scaleX(0.8925);opacity:.5;-webkit-text-stroke:1.6px currentColor;filter:blur(.4px);">kniss</div>
<div class="a" style="left:862.50px;top:419.50px;font-size:46px;line-height:56px;font-weight:bold;color:#858585;transform-origin:0 50%;transform:scaleX(0.8056);opacity:.5;-webkit-text-stroke:1.6px currentColor;filter:blur(.4px);">.com</div>
</body>
</html>
